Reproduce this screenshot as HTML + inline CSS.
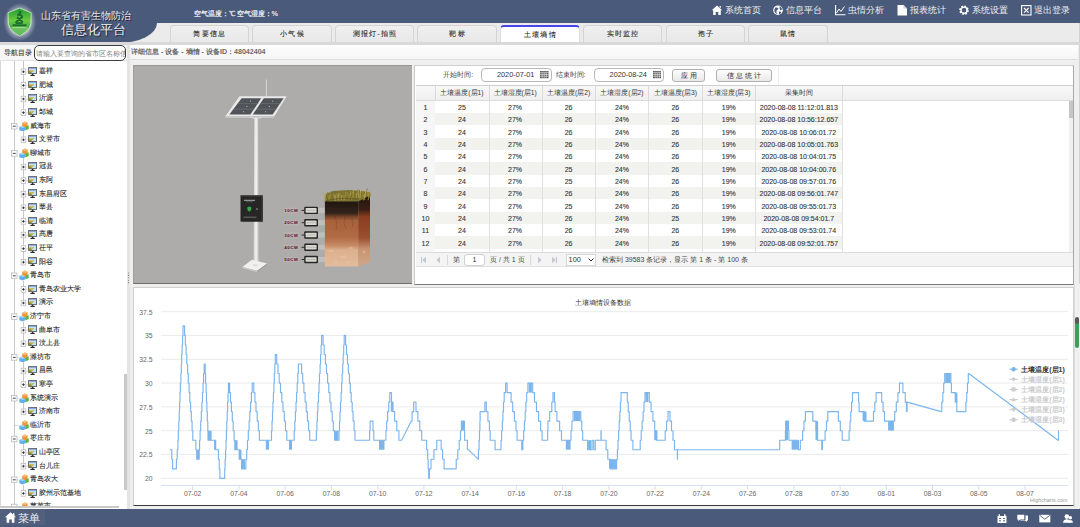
<!DOCTYPE html>
<html><head><meta charset="utf-8"><style>
*{box-sizing:border-box;margin:0;padding:0}
html,body{width:1080px;height:527px;overflow:hidden;background:#efefef;font-family:"Liberation Sans",sans-serif;color:#333}
.a{position:absolute}
.t{white-space:nowrap;line-height:1}
.k{-webkit-text-stroke:0.1px currentColor}
.tab{position:absolute;top:25.3px;height:16.9px;width:79.5px;background:linear-gradient(#f0f0f0,#e8e8e8);border:1px solid #d4d4d4;border-bottom:none;border-radius:4px 4px 0 0;font-size:7.2px;text-align:center;line-height:15.6px;color:#262626;letter-spacing:1.2px;padding-left:1px;-webkit-text-stroke:0.1px #262626}
.tab.act{background:#fff;border-color:#dcdcdc;border-top:2px solid #4646ec;line-height:15.9px}
.nav{position:absolute;top:5px;height:12px;font-size:9.3px;color:#eef0f4;line-height:12px;white-space:nowrap}
.nav svg{position:absolute;top:0.5px}
</style></head><body>
<div class="a" style="left:0;top:22.6px;width:1080px;height:20px;background:#ebebeb"></div>
<div class="a" style="left:1078.5px;top:22.6px;width:0.9px;height:486px;background:#d2d2d2"></div>
<div class="a" style="left:0;top:0;width:1080px;height:22.6px;background:#4a5a7a"></div>
<div class="a" style="left:0;top:0;width:157px;height:42.6px;background:#4a5a7a;border-bottom-right-radius:39px 20px"></div>
<svg class="a" style="left:0;top:0" width="42" height="43" viewBox="0 0 42 43">
<defs><radialGradient id="glow" cx="50%" cy="50%" r="50%"><stop offset="0.6" stop-color="#fff" stop-opacity="0.75"/><stop offset="0.78" stop-color="#fff" stop-opacity="0.3"/><stop offset="1" stop-color="#fff" stop-opacity="0"/></radialGradient>
<linearGradient id="sh" x1="0" y1="0" x2="0" y2="1"><stop offset="0" stop-color="#1f9a34"/><stop offset="0.45" stop-color="#6ccb3e"/><stop offset="0.62" stop-color="#4fb848"/><stop offset="1" stop-color="#2f9a3a"/></linearGradient></defs>
<ellipse cx="19.8" cy="22" rx="16.5" ry="19" fill="url(#glow)"/>
<path d="M19.6 8.1 L31.2 12.8 L30.8 24 Q29 31 19.6 35.9 Q10.2 31 8.4 24 L8 12.8 Z" fill="url(#sh)" stroke="#dff3d8" stroke-width="0.7"/>
<path d="M10 27.5 Q19.6 26 29.5 27.5 Q27 32 19.6 35 Q12 32 10 27.5Z" fill="#8ed47a" opacity="0.55"/>
<circle cx="20" cy="12.6" r="1.5" fill="#1c6e2c"/>
<path d="M17.2 14.8 Q22 14.6 22.2 17 L16.4 21.8 Q15.6 23.1 17.2 23.1 L22.6 23.1 M17 17.2 L22.8 22.2" stroke="#1c6e2c" stroke-width="1.9" fill="none" stroke-linejoin="round"/>
<path d="M12.5 25.3 H26.5" stroke="#1c6e2c" stroke-width="1.9"/>
<path d="M12.5 27.4 H26.5" stroke="#c8f0b0" stroke-width="0.6"/>
</svg>
<div class="a t" style="left:41px;top:10.8px;font-size:10.1px;color:#e4e6ea;text-shadow:0.6px 0.6px 0.6px #1a2236">山东省有害生物防治</div>
<div class="a t" style="left:61.3px;top:23.7px;font-size:12.7px;color:#eceef2;text-shadow:0.7px 0.7px 0.7px #1a2236">信息化平台</div>
<div class="a t" style="left:193.5px;top:10.2px;font-size:7.3px;color:#e8eaf0;font-weight:bold">空气温度：℃ 空气湿度：%</div>
<svg class="a" style="left:711.5px;top:5.3px" width="11" height="11" viewBox="0 0 11 11"><path d="M5 0.5 L10.2 5.2 H8.8 V10 H6.3 V7 H3.7 V10 H1.2 V5.2 H-0.2 Z M7.5 1 h1.3 v2.3 l-1.3 -1.2z" fill="#fff"/></svg>
<div class="a t" style="left:725.0px;top:6.2px;font-size:9.2px;color:#eef0f4">系统首页</div>
<svg class="a" style="left:773.0px;top:5.3px" width="11" height="11" viewBox="0 0 11 11"><circle cx="5" cy="5.2" r="4.8" fill="#fff"/><path d="M2.5 2.5 Q4.5 2 5.5 3.5 Q4.5 5 3.5 5.5 Q3 7.5 4.5 9.2 Q2 8.5 1.3 6 Q1.2 3.8 2.5 2.5Z M6.5 1.2 Q8.7 2 9.3 4.5 Q8 4.5 7.2 5.5 Q6.5 4 6.5 1.2Z M6 6.5 Q7.5 6 8.3 7.5 Q7.5 9 6 9.5Z" fill="#4a5a7a"/></svg>
<div class="a t" style="left:786.0px;top:6.2px;font-size:9.2px;color:#eef0f4">信息平台</div>
<svg class="a" style="left:835.0px;top:5.3px" width="11" height="11" viewBox="0 0 11 11"><path d="M0.6 0 V9.8 H10.5" stroke="#fff" stroke-width="1.1" fill="none"/><path d="M1.5 8 L4 4 L6 6.5 L9.5 1.5" stroke="#fff" stroke-width="1" fill="none"/></svg>
<div class="a t" style="left:848.0px;top:6.2px;font-size:9.2px;color:#eef0f4">虫情分析</div>
<svg class="a" style="left:896.7px;top:5.3px" width="11" height="11" viewBox="0 0 11 11"><path d="M0.5 0 H6.5 L10 3.5 V10.5 H0.5 Z" fill="#fff"/><path d="M6.5 0 V3.5 H10" fill="#c8ccd8"/></svg>
<div class="a t" style="left:909.6px;top:6.2px;font-size:9.2px;color:#eef0f4">报表统计</div>
<svg class="a" style="left:959.0px;top:5.3px" width="11" height="11" viewBox="0 0 11 11"><circle cx="5" cy="5.2" r="3.6" fill="none" stroke="#fff" stroke-width="2.4" stroke-dasharray="1.6 1.2"/><circle cx="5" cy="5.2" r="3.1" fill="none" stroke="#fff" stroke-width="1.3"/></svg>
<div class="a t" style="left:972.0px;top:6.2px;font-size:9.2px;color:#eef0f4">系统设置</div>
<svg class="a" style="left:1021.0px;top:5.3px" width="11" height="11" viewBox="0 0 11 11"><rect x="0.6" y="0.6" width="9.4" height="9.4" fill="none" stroke="#fff" stroke-width="1.1"/><path d="M3 3 L7.6 7.6 M7.6 3 L3 7.6" stroke="#fff" stroke-width="1.1"/></svg>
<div class="a t" style="left:1033.7px;top:6.2px;font-size:9.2px;color:#eef0f4">退出登录</div>
<div class="a" style="left:0;top:42.4px;width:1080px;height:2.3px;background:#d9d9d9"></div>
<div class="tab" style="left:169.5px">简要信息</div>
<div class="tab" style="left:252.2px">小气候</div>
<div class="tab" style="left:334.8px">测报灯-拍照</div>
<div class="tab" style="left:417.4px">靶标</div>
<div class="tab act" style="left:500.2px">土壤墒情</div>
<div class="tab" style="left:582.9px">实时监控</div>
<div class="tab" style="left:665.5px">孢子</div>
<div class="tab" style="left:748.0px">鼠情</div>
<div class="a" style="left:0;top:44.6px;width:127.4px;height:16.6px;background:#f6f6f6;border-bottom:1px solid #e2e2e2"></div>
<div class="a t k" style="left:3.8px;top:49.6px;font-size:6.9px;color:#3a3a3a">导航目录</div>
<div class="a" style="left:34px;top:45.3px;width:91.8px;height:16.2px;border:1.1px solid #3c3c3c;border-radius:5px;background:#fff;overflow:hidden"><div class="t" style="position:absolute;left:0.7px;top:3.4px;font-size:7.3px;color:#808080">请输入要查询的省市区名称信息</div></div>
<div class="a" style="left:0;top:61.2px;width:127.4px;height:447.6px;background:#fff;border-left:1px solid #d8d8d8;overflow:hidden">
</div>
<div class="a" style="left:14.2px;top:61.2px;width:0;height:445px;border-left:0.8px solid #c8c8c8"></div>
<div class="a" style="left:23.3px;top:61.2px;width:0;height:51.4px;border-left:0.8px solid #c8c8c8"></div>
<div class="a" style="left:23.3px;top:131.2px;width:0;height:8.6px;border-left:0.8px solid #c8c8c8"></div>
<div class="a" style="left:23.3px;top:158.4px;width:0;height:103.8px;border-left:0.8px solid #c8c8c8"></div>
<div class="a" style="left:23.3px;top:280.8px;width:0;height:22.2px;border-left:0.8px solid #c8c8c8"></div>
<div class="a" style="left:23.3px;top:321.6px;width:0;height:22.2px;border-left:0.8px solid #c8c8c8"></div>
<div class="a" style="left:23.3px;top:362.4px;width:0;height:22.2px;border-left:0.8px solid #c8c8c8"></div>
<div class="a" style="left:23.3px;top:403.2px;width:0;height:8.6px;border-left:0.8px solid #c8c8c8"></div>
<div class="a" style="left:23.3px;top:444.0px;width:0;height:22.2px;border-left:0.8px solid #c8c8c8"></div>
<div class="a" style="left:23.3px;top:484.8px;width:0;height:8.6px;border-left:0.8px solid #c8c8c8"></div>
<svg class="a" style="left:0;top:0" width="130" height="509" viewBox="0 0 130 509"><rect x="21.1" y="69.00" width="4.7" height="5.6" fill="#fff" stroke="#b4b4b4" stroke-width="0.7"/><path d="M22.1 71.80 h2.7 M23.45 70.45 v2.7" stroke="#222" stroke-width="0.8"/><path d="M25.8 71.80 h2" stroke="#c8c8c8" stroke-width="0.6"/><rect x="21.1" y="82.60" width="4.7" height="5.6" fill="#fff" stroke="#b4b4b4" stroke-width="0.7"/><path d="M22.1 85.40 h2.7 M23.45 84.05 v2.7" stroke="#222" stroke-width="0.8"/><path d="M25.8 85.40 h2" stroke="#c8c8c8" stroke-width="0.6"/><rect x="21.1" y="96.20" width="4.7" height="5.6" fill="#fff" stroke="#b4b4b4" stroke-width="0.7"/><path d="M22.1 99.00 h2.7 M23.45 97.65 v2.7" stroke="#222" stroke-width="0.8"/><path d="M25.8 99.00 h2" stroke="#c8c8c8" stroke-width="0.6"/><rect x="21.1" y="109.80" width="4.7" height="5.6" fill="#fff" stroke="#b4b4b4" stroke-width="0.7"/><path d="M22.1 112.60 h2.7 M23.45 111.25 v2.7" stroke="#222" stroke-width="0.8"/><path d="M25.8 112.60 h2" stroke="#c8c8c8" stroke-width="0.6"/><rect x="11.6" y="123.40" width="5.4" height="5.6" fill="#fafafa" stroke="#b4b4b4" stroke-width="0.7"/><path d="M12.9 126.20 h2.8" stroke="#333" stroke-width="0.9"/><path d="M17 126.20 h1.8" stroke="#c8c8c8" stroke-width="0.6"/><rect x="21.1" y="137.00" width="4.7" height="5.6" fill="#fff" stroke="#b4b4b4" stroke-width="0.7"/><path d="M22.1 139.80 h2.7 M23.45 138.45 v2.7" stroke="#222" stroke-width="0.8"/><path d="M25.8 139.80 h2" stroke="#c8c8c8" stroke-width="0.6"/><rect x="11.6" y="150.60" width="5.4" height="5.6" fill="#fafafa" stroke="#b4b4b4" stroke-width="0.7"/><path d="M12.9 153.40 h2.8" stroke="#333" stroke-width="0.9"/><path d="M17 153.40 h1.8" stroke="#c8c8c8" stroke-width="0.6"/><rect x="21.1" y="164.20" width="4.7" height="5.6" fill="#fff" stroke="#b4b4b4" stroke-width="0.7"/><path d="M22.1 167.00 h2.7 M23.45 165.65 v2.7" stroke="#222" stroke-width="0.8"/><path d="M25.8 167.00 h2" stroke="#c8c8c8" stroke-width="0.6"/><rect x="21.1" y="177.80" width="4.7" height="5.6" fill="#fff" stroke="#b4b4b4" stroke-width="0.7"/><path d="M22.1 180.60 h2.7 M23.45 179.25 v2.7" stroke="#222" stroke-width="0.8"/><path d="M25.8 180.60 h2" stroke="#c8c8c8" stroke-width="0.6"/><rect x="21.1" y="191.40" width="4.7" height="5.6" fill="#fff" stroke="#b4b4b4" stroke-width="0.7"/><path d="M22.1 194.20 h2.7 M23.45 192.85 v2.7" stroke="#222" stroke-width="0.8"/><path d="M25.8 194.20 h2" stroke="#c8c8c8" stroke-width="0.6"/><rect x="21.1" y="205.00" width="4.7" height="5.6" fill="#fff" stroke="#b4b4b4" stroke-width="0.7"/><path d="M22.1 207.80 h2.7 M23.45 206.45 v2.7" stroke="#222" stroke-width="0.8"/><path d="M25.8 207.80 h2" stroke="#c8c8c8" stroke-width="0.6"/><rect x="21.1" y="218.60" width="4.7" height="5.6" fill="#fff" stroke="#b4b4b4" stroke-width="0.7"/><path d="M22.1 221.40 h2.7 M23.45 220.05 v2.7" stroke="#222" stroke-width="0.8"/><path d="M25.8 221.40 h2" stroke="#c8c8c8" stroke-width="0.6"/><rect x="21.1" y="232.20" width="4.7" height="5.6" fill="#fff" stroke="#b4b4b4" stroke-width="0.7"/><path d="M22.1 235.00 h2.7 M23.45 233.65 v2.7" stroke="#222" stroke-width="0.8"/><path d="M25.8 235.00 h2" stroke="#c8c8c8" stroke-width="0.6"/><rect x="21.1" y="245.80" width="4.7" height="5.6" fill="#fff" stroke="#b4b4b4" stroke-width="0.7"/><path d="M22.1 248.60 h2.7 M23.45 247.25 v2.7" stroke="#222" stroke-width="0.8"/><path d="M25.8 248.60 h2" stroke="#c8c8c8" stroke-width="0.6"/><rect x="21.1" y="259.40" width="4.7" height="5.6" fill="#fff" stroke="#b4b4b4" stroke-width="0.7"/><path d="M22.1 262.20 h2.7 M23.45 260.85 v2.7" stroke="#222" stroke-width="0.8"/><path d="M25.8 262.20 h2" stroke="#c8c8c8" stroke-width="0.6"/><rect x="11.6" y="273.00" width="5.4" height="5.6" fill="#fafafa" stroke="#b4b4b4" stroke-width="0.7"/><path d="M12.9 275.80 h2.8" stroke="#333" stroke-width="0.9"/><path d="M17 275.80 h1.8" stroke="#c8c8c8" stroke-width="0.6"/><rect x="21.1" y="286.60" width="4.7" height="5.6" fill="#fff" stroke="#b4b4b4" stroke-width="0.7"/><path d="M22.1 289.40 h2.7 M23.45 288.05 v2.7" stroke="#222" stroke-width="0.8"/><path d="M25.8 289.40 h2" stroke="#c8c8c8" stroke-width="0.6"/><rect x="21.1" y="300.20" width="4.7" height="5.6" fill="#fff" stroke="#b4b4b4" stroke-width="0.7"/><path d="M22.1 303.00 h2.7 M23.45 301.65 v2.7" stroke="#222" stroke-width="0.8"/><path d="M25.8 303.00 h2" stroke="#c8c8c8" stroke-width="0.6"/><rect x="11.6" y="313.80" width="5.4" height="5.6" fill="#fafafa" stroke="#b4b4b4" stroke-width="0.7"/><path d="M12.9 316.60 h2.8" stroke="#333" stroke-width="0.9"/><path d="M17 316.60 h1.8" stroke="#c8c8c8" stroke-width="0.6"/><rect x="21.1" y="327.40" width="4.7" height="5.6" fill="#fff" stroke="#b4b4b4" stroke-width="0.7"/><path d="M22.1 330.20 h2.7 M23.45 328.85 v2.7" stroke="#222" stroke-width="0.8"/><path d="M25.8 330.20 h2" stroke="#c8c8c8" stroke-width="0.6"/><rect x="21.1" y="341.00" width="4.7" height="5.6" fill="#fff" stroke="#b4b4b4" stroke-width="0.7"/><path d="M22.1 343.80 h2.7 M23.45 342.45 v2.7" stroke="#222" stroke-width="0.8"/><path d="M25.8 343.80 h2" stroke="#c8c8c8" stroke-width="0.6"/><rect x="11.6" y="354.60" width="5.4" height="5.6" fill="#fafafa" stroke="#b4b4b4" stroke-width="0.7"/><path d="M12.9 357.40 h2.8" stroke="#333" stroke-width="0.9"/><path d="M17 357.40 h1.8" stroke="#c8c8c8" stroke-width="0.6"/><rect x="21.1" y="368.20" width="4.7" height="5.6" fill="#fff" stroke="#b4b4b4" stroke-width="0.7"/><path d="M22.1 371.00 h2.7 M23.45 369.65 v2.7" stroke="#222" stroke-width="0.8"/><path d="M25.8 371.00 h2" stroke="#c8c8c8" stroke-width="0.6"/><rect x="21.1" y="381.80" width="4.7" height="5.6" fill="#fff" stroke="#b4b4b4" stroke-width="0.7"/><path d="M22.1 384.60 h2.7 M23.45 383.25 v2.7" stroke="#222" stroke-width="0.8"/><path d="M25.8 384.60 h2" stroke="#c8c8c8" stroke-width="0.6"/><rect x="11.6" y="395.40" width="5.4" height="5.6" fill="#fafafa" stroke="#b4b4b4" stroke-width="0.7"/><path d="M12.9 398.20 h2.8" stroke="#333" stroke-width="0.9"/><path d="M17 398.20 h1.8" stroke="#c8c8c8" stroke-width="0.6"/><rect x="21.1" y="409.00" width="4.7" height="5.6" fill="#fff" stroke="#b4b4b4" stroke-width="0.7"/><path d="M22.1 411.80 h2.7 M23.45 410.45 v2.7" stroke="#222" stroke-width="0.8"/><path d="M25.8 411.80 h2" stroke="#c8c8c8" stroke-width="0.6"/><path d="M14.5 425.40 h4.3" stroke="#c8c8c8" stroke-width="0.7"/><rect x="11.6" y="436.20" width="5.4" height="5.6" fill="#fafafa" stroke="#b4b4b4" stroke-width="0.7"/><path d="M12.9 439.00 h2.8" stroke="#333" stroke-width="0.9"/><path d="M17 439.00 h1.8" stroke="#c8c8c8" stroke-width="0.6"/><rect x="21.1" y="449.80" width="4.7" height="5.6" fill="#fff" stroke="#b4b4b4" stroke-width="0.7"/><path d="M22.1 452.60 h2.7 M23.45 451.25 v2.7" stroke="#222" stroke-width="0.8"/><path d="M25.8 452.60 h2" stroke="#c8c8c8" stroke-width="0.6"/><rect x="21.1" y="463.40" width="4.7" height="5.6" fill="#fff" stroke="#b4b4b4" stroke-width="0.7"/><path d="M22.1 466.20 h2.7 M23.45 464.85 v2.7" stroke="#222" stroke-width="0.8"/><path d="M25.8 466.20 h2" stroke="#c8c8c8" stroke-width="0.6"/><rect x="11.6" y="477.00" width="5.4" height="5.6" fill="#fafafa" stroke="#b4b4b4" stroke-width="0.7"/><path d="M12.9 479.80 h2.8" stroke="#333" stroke-width="0.9"/><path d="M17 479.80 h1.8" stroke="#c8c8c8" stroke-width="0.6"/><rect x="21.1" y="490.60" width="4.7" height="5.6" fill="#fff" stroke="#b4b4b4" stroke-width="0.7"/><path d="M22.1 493.40 h2.7 M23.45 492.05 v2.7" stroke="#222" stroke-width="0.8"/><path d="M25.8 493.40 h2" stroke="#c8c8c8" stroke-width="0.6"/><rect x="11.6" y="504.20" width="5.4" height="5.6" fill="#fafafa" stroke="#b4b4b4" stroke-width="0.7"/><path d="M12.9 507.00 h2.8" stroke="#333" stroke-width="0.9"/><path d="M17 507.00 h1.8" stroke="#c8c8c8" stroke-width="0.6"/></svg>
<svg class="a" style="left:28px;top:67.0px" width="9.2" height="9.2" viewBox="0 0 9.2 9.2">
<rect x="0.2" y="0.2" width="8.8" height="6.6" fill="#3a3a3a"/><rect x="0.9" y="0.9" width="7.4" height="5.2" fill="#bfe3f8"/>
<rect x="0.9" y="0.9" width="7.4" height="1" fill="#8aa3d8"/>
<path d="M0.9 6.1 L0.9 3.6 Q3 3 4.2 3.6 Q5 2.6 6.3 3.3 Q4.5 4.5 3.8 6.1Z" fill="#d4a82a"/><path d="M0.9 6.1 L0.9 4.6 Q2 4.2 3 5.2 L3.2 6.1Z" fill="#6a9a2a"/>
<rect x="3.8" y="6.8" width="1.6" height="1.2" fill="#333"/><rect x="2.4" y="7.9" width="4.4" height="1.1" fill="#2a2a2a"/>
</svg>
<div class="a t k" style="left:39.1px;top:68.2px;font-size:6.9px;color:#262626">嘉祥</div>
<svg class="a" style="left:28px;top:80.6px" width="9.2" height="9.2" viewBox="0 0 9.2 9.2">
<rect x="0.2" y="0.2" width="8.8" height="6.6" fill="#3a3a3a"/><rect x="0.9" y="0.9" width="7.4" height="5.2" fill="#bfe3f8"/>
<rect x="0.9" y="0.9" width="7.4" height="1" fill="#8aa3d8"/>
<path d="M0.9 6.1 L0.9 3.6 Q3 3 4.2 3.6 Q5 2.6 6.3 3.3 Q4.5 4.5 3.8 6.1Z" fill="#d4a82a"/><path d="M0.9 6.1 L0.9 4.6 Q2 4.2 3 5.2 L3.2 6.1Z" fill="#6a9a2a"/>
<rect x="3.8" y="6.8" width="1.6" height="1.2" fill="#333"/><rect x="2.4" y="7.9" width="4.4" height="1.1" fill="#2a2a2a"/>
</svg>
<div class="a t k" style="left:39.1px;top:81.8px;font-size:6.9px;color:#262626">肥城</div>
<svg class="a" style="left:28px;top:94.2px" width="9.2" height="9.2" viewBox="0 0 9.2 9.2">
<rect x="0.2" y="0.2" width="8.8" height="6.6" fill="#3a3a3a"/><rect x="0.9" y="0.9" width="7.4" height="5.2" fill="#bfe3f8"/>
<rect x="0.9" y="0.9" width="7.4" height="1" fill="#8aa3d8"/>
<path d="M0.9 6.1 L0.9 3.6 Q3 3 4.2 3.6 Q5 2.6 6.3 3.3 Q4.5 4.5 3.8 6.1Z" fill="#d4a82a"/><path d="M0.9 6.1 L0.9 4.6 Q2 4.2 3 5.2 L3.2 6.1Z" fill="#6a9a2a"/>
<rect x="3.8" y="6.8" width="1.6" height="1.2" fill="#333"/><rect x="2.4" y="7.9" width="4.4" height="1.1" fill="#2a2a2a"/>
</svg>
<div class="a t k" style="left:39.1px;top:95.4px;font-size:6.9px;color:#262626">沂源</div>
<svg class="a" style="left:28px;top:107.8px" width="9.2" height="9.2" viewBox="0 0 9.2 9.2">
<rect x="0.2" y="0.2" width="8.8" height="6.6" fill="#3a3a3a"/><rect x="0.9" y="0.9" width="7.4" height="5.2" fill="#bfe3f8"/>
<rect x="0.9" y="0.9" width="7.4" height="1" fill="#8aa3d8"/>
<path d="M0.9 6.1 L0.9 3.6 Q3 3 4.2 3.6 Q5 2.6 6.3 3.3 Q4.5 4.5 3.8 6.1Z" fill="#d4a82a"/><path d="M0.9 6.1 L0.9 4.6 Q2 4.2 3 5.2 L3.2 6.1Z" fill="#6a9a2a"/>
<rect x="3.8" y="6.8" width="1.6" height="1.2" fill="#333"/><rect x="2.4" y="7.9" width="4.4" height="1.1" fill="#2a2a2a"/>
</svg>
<div class="a t k" style="left:39.1px;top:109.0px;font-size:6.9px;color:#262626">邹城</div>
<svg class="a" style="left:18.8px;top:120.7px" width="10" height="10.5" viewBox="0 0 10 10.5">
<path d="M6 5 L9.6 4.2 L9.8 8 L6.5 9.2Z" fill="#5bb53a"/>
<path d="M0.3 6 L3.5 4.6 L6.8 5.8 L6.8 9 L3.8 10.4 L0.3 9.2Z" fill="#62aee8"/><path d="M0.3 6 L3.5 4.6 L6.8 5.8 L3.8 7.1Z" fill="#a8d4f6"/>
<path d="M3.2 2 L5.8 0.4 L8.6 1.6 L8.6 4.6 L5.8 6.2 L3.2 4.8Z" fill="#f0963a"/><path d="M3.2 2 L5.8 0.4 L8.6 1.6 L6 3.1Z" fill="#f9c07a"/>
</svg>
<div class="a t k" style="left:30.3px;top:122.6px;font-size:6.9px;color:#262626">威海市</div>
<svg class="a" style="left:28px;top:135.0px" width="9.2" height="9.2" viewBox="0 0 9.2 9.2">
<rect x="0.2" y="0.2" width="8.8" height="6.6" fill="#3a3a3a"/><rect x="0.9" y="0.9" width="7.4" height="5.2" fill="#bfe3f8"/>
<rect x="0.9" y="0.9" width="7.4" height="1" fill="#8aa3d8"/>
<path d="M0.9 6.1 L0.9 3.6 Q3 3 4.2 3.6 Q5 2.6 6.3 3.3 Q4.5 4.5 3.8 6.1Z" fill="#d4a82a"/><path d="M0.9 6.1 L0.9 4.6 Q2 4.2 3 5.2 L3.2 6.1Z" fill="#6a9a2a"/>
<rect x="3.8" y="6.8" width="1.6" height="1.2" fill="#333"/><rect x="2.4" y="7.9" width="4.4" height="1.1" fill="#2a2a2a"/>
</svg>
<div class="a t k" style="left:39.1px;top:136.2px;font-size:6.9px;color:#262626">文登市</div>
<svg class="a" style="left:18.8px;top:147.9px" width="10" height="10.5" viewBox="0 0 10 10.5">
<path d="M6 5 L9.6 4.2 L9.8 8 L6.5 9.2Z" fill="#5bb53a"/>
<path d="M0.3 6 L3.5 4.6 L6.8 5.8 L6.8 9 L3.8 10.4 L0.3 9.2Z" fill="#62aee8"/><path d="M0.3 6 L3.5 4.6 L6.8 5.8 L3.8 7.1Z" fill="#a8d4f6"/>
<path d="M3.2 2 L5.8 0.4 L8.6 1.6 L8.6 4.6 L5.8 6.2 L3.2 4.8Z" fill="#f0963a"/><path d="M3.2 2 L5.8 0.4 L8.6 1.6 L6 3.1Z" fill="#f9c07a"/>
</svg>
<div class="a t k" style="left:30.3px;top:149.8px;font-size:6.9px;color:#262626">聊城市</div>
<svg class="a" style="left:28px;top:162.2px" width="9.2" height="9.2" viewBox="0 0 9.2 9.2">
<rect x="0.2" y="0.2" width="8.8" height="6.6" fill="#3a3a3a"/><rect x="0.9" y="0.9" width="7.4" height="5.2" fill="#bfe3f8"/>
<rect x="0.9" y="0.9" width="7.4" height="1" fill="#8aa3d8"/>
<path d="M0.9 6.1 L0.9 3.6 Q3 3 4.2 3.6 Q5 2.6 6.3 3.3 Q4.5 4.5 3.8 6.1Z" fill="#d4a82a"/><path d="M0.9 6.1 L0.9 4.6 Q2 4.2 3 5.2 L3.2 6.1Z" fill="#6a9a2a"/>
<rect x="3.8" y="6.8" width="1.6" height="1.2" fill="#333"/><rect x="2.4" y="7.9" width="4.4" height="1.1" fill="#2a2a2a"/>
</svg>
<div class="a t k" style="left:39.1px;top:163.4px;font-size:6.9px;color:#262626">冠县</div>
<svg class="a" style="left:28px;top:175.8px" width="9.2" height="9.2" viewBox="0 0 9.2 9.2">
<rect x="0.2" y="0.2" width="8.8" height="6.6" fill="#3a3a3a"/><rect x="0.9" y="0.9" width="7.4" height="5.2" fill="#bfe3f8"/>
<rect x="0.9" y="0.9" width="7.4" height="1" fill="#8aa3d8"/>
<path d="M0.9 6.1 L0.9 3.6 Q3 3 4.2 3.6 Q5 2.6 6.3 3.3 Q4.5 4.5 3.8 6.1Z" fill="#d4a82a"/><path d="M0.9 6.1 L0.9 4.6 Q2 4.2 3 5.2 L3.2 6.1Z" fill="#6a9a2a"/>
<rect x="3.8" y="6.8" width="1.6" height="1.2" fill="#333"/><rect x="2.4" y="7.9" width="4.4" height="1.1" fill="#2a2a2a"/>
</svg>
<div class="a t k" style="left:39.1px;top:177.0px;font-size:6.9px;color:#262626">东阿</div>
<svg class="a" style="left:28px;top:189.4px" width="9.2" height="9.2" viewBox="0 0 9.2 9.2">
<rect x="0.2" y="0.2" width="8.8" height="6.6" fill="#3a3a3a"/><rect x="0.9" y="0.9" width="7.4" height="5.2" fill="#bfe3f8"/>
<rect x="0.9" y="0.9" width="7.4" height="1" fill="#8aa3d8"/>
<path d="M0.9 6.1 L0.9 3.6 Q3 3 4.2 3.6 Q5 2.6 6.3 3.3 Q4.5 4.5 3.8 6.1Z" fill="#d4a82a"/><path d="M0.9 6.1 L0.9 4.6 Q2 4.2 3 5.2 L3.2 6.1Z" fill="#6a9a2a"/>
<rect x="3.8" y="6.8" width="1.6" height="1.2" fill="#333"/><rect x="2.4" y="7.9" width="4.4" height="1.1" fill="#2a2a2a"/>
</svg>
<div class="a t k" style="left:39.1px;top:190.6px;font-size:6.9px;color:#262626">东昌府区</div>
<svg class="a" style="left:28px;top:203.0px" width="9.2" height="9.2" viewBox="0 0 9.2 9.2">
<rect x="0.2" y="0.2" width="8.8" height="6.6" fill="#3a3a3a"/><rect x="0.9" y="0.9" width="7.4" height="5.2" fill="#bfe3f8"/>
<rect x="0.9" y="0.9" width="7.4" height="1" fill="#8aa3d8"/>
<path d="M0.9 6.1 L0.9 3.6 Q3 3 4.2 3.6 Q5 2.6 6.3 3.3 Q4.5 4.5 3.8 6.1Z" fill="#d4a82a"/><path d="M0.9 6.1 L0.9 4.6 Q2 4.2 3 5.2 L3.2 6.1Z" fill="#6a9a2a"/>
<rect x="3.8" y="6.8" width="1.6" height="1.2" fill="#333"/><rect x="2.4" y="7.9" width="4.4" height="1.1" fill="#2a2a2a"/>
</svg>
<div class="a t k" style="left:39.1px;top:204.2px;font-size:6.9px;color:#262626">莘县</div>
<svg class="a" style="left:28px;top:216.6px" width="9.2" height="9.2" viewBox="0 0 9.2 9.2">
<rect x="0.2" y="0.2" width="8.8" height="6.6" fill="#3a3a3a"/><rect x="0.9" y="0.9" width="7.4" height="5.2" fill="#bfe3f8"/>
<rect x="0.9" y="0.9" width="7.4" height="1" fill="#8aa3d8"/>
<path d="M0.9 6.1 L0.9 3.6 Q3 3 4.2 3.6 Q5 2.6 6.3 3.3 Q4.5 4.5 3.8 6.1Z" fill="#d4a82a"/><path d="M0.9 6.1 L0.9 4.6 Q2 4.2 3 5.2 L3.2 6.1Z" fill="#6a9a2a"/>
<rect x="3.8" y="6.8" width="1.6" height="1.2" fill="#333"/><rect x="2.4" y="7.9" width="4.4" height="1.1" fill="#2a2a2a"/>
</svg>
<div class="a t k" style="left:39.1px;top:217.8px;font-size:6.9px;color:#262626">临清</div>
<svg class="a" style="left:28px;top:230.2px" width="9.2" height="9.2" viewBox="0 0 9.2 9.2">
<rect x="0.2" y="0.2" width="8.8" height="6.6" fill="#3a3a3a"/><rect x="0.9" y="0.9" width="7.4" height="5.2" fill="#bfe3f8"/>
<rect x="0.9" y="0.9" width="7.4" height="1" fill="#8aa3d8"/>
<path d="M0.9 6.1 L0.9 3.6 Q3 3 4.2 3.6 Q5 2.6 6.3 3.3 Q4.5 4.5 3.8 6.1Z" fill="#d4a82a"/><path d="M0.9 6.1 L0.9 4.6 Q2 4.2 3 5.2 L3.2 6.1Z" fill="#6a9a2a"/>
<rect x="3.8" y="6.8" width="1.6" height="1.2" fill="#333"/><rect x="2.4" y="7.9" width="4.4" height="1.1" fill="#2a2a2a"/>
</svg>
<div class="a t k" style="left:39.1px;top:231.4px;font-size:6.9px;color:#262626">高唐</div>
<svg class="a" style="left:28px;top:243.8px" width="9.2" height="9.2" viewBox="0 0 9.2 9.2">
<rect x="0.2" y="0.2" width="8.8" height="6.6" fill="#3a3a3a"/><rect x="0.9" y="0.9" width="7.4" height="5.2" fill="#bfe3f8"/>
<rect x="0.9" y="0.9" width="7.4" height="1" fill="#8aa3d8"/>
<path d="M0.9 6.1 L0.9 3.6 Q3 3 4.2 3.6 Q5 2.6 6.3 3.3 Q4.5 4.5 3.8 6.1Z" fill="#d4a82a"/><path d="M0.9 6.1 L0.9 4.6 Q2 4.2 3 5.2 L3.2 6.1Z" fill="#6a9a2a"/>
<rect x="3.8" y="6.8" width="1.6" height="1.2" fill="#333"/><rect x="2.4" y="7.9" width="4.4" height="1.1" fill="#2a2a2a"/>
</svg>
<div class="a t k" style="left:39.1px;top:245.0px;font-size:6.9px;color:#262626">茌平</div>
<svg class="a" style="left:28px;top:257.4px" width="9.2" height="9.2" viewBox="0 0 9.2 9.2">
<rect x="0.2" y="0.2" width="8.8" height="6.6" fill="#3a3a3a"/><rect x="0.9" y="0.9" width="7.4" height="5.2" fill="#bfe3f8"/>
<rect x="0.9" y="0.9" width="7.4" height="1" fill="#8aa3d8"/>
<path d="M0.9 6.1 L0.9 3.6 Q3 3 4.2 3.6 Q5 2.6 6.3 3.3 Q4.5 4.5 3.8 6.1Z" fill="#d4a82a"/><path d="M0.9 6.1 L0.9 4.6 Q2 4.2 3 5.2 L3.2 6.1Z" fill="#6a9a2a"/>
<rect x="3.8" y="6.8" width="1.6" height="1.2" fill="#333"/><rect x="2.4" y="7.9" width="4.4" height="1.1" fill="#2a2a2a"/>
</svg>
<div class="a t k" style="left:39.1px;top:258.6px;font-size:6.9px;color:#262626">阳谷</div>
<svg class="a" style="left:18.8px;top:270.3px" width="10" height="10.5" viewBox="0 0 10 10.5">
<path d="M6 5 L9.6 4.2 L9.8 8 L6.5 9.2Z" fill="#5bb53a"/>
<path d="M0.3 6 L3.5 4.6 L6.8 5.8 L6.8 9 L3.8 10.4 L0.3 9.2Z" fill="#62aee8"/><path d="M0.3 6 L3.5 4.6 L6.8 5.8 L3.8 7.1Z" fill="#a8d4f6"/>
<path d="M3.2 2 L5.8 0.4 L8.6 1.6 L8.6 4.6 L5.8 6.2 L3.2 4.8Z" fill="#f0963a"/><path d="M3.2 2 L5.8 0.4 L8.6 1.6 L6 3.1Z" fill="#f9c07a"/>
</svg>
<div class="a t k" style="left:30.3px;top:272.2px;font-size:6.9px;color:#262626">青岛市</div>
<svg class="a" style="left:28px;top:284.6px" width="9.2" height="9.2" viewBox="0 0 9.2 9.2">
<rect x="0.2" y="0.2" width="8.8" height="6.6" fill="#3a3a3a"/><rect x="0.9" y="0.9" width="7.4" height="5.2" fill="#bfe3f8"/>
<rect x="0.9" y="0.9" width="7.4" height="1" fill="#8aa3d8"/>
<path d="M0.9 6.1 L0.9 3.6 Q3 3 4.2 3.6 Q5 2.6 6.3 3.3 Q4.5 4.5 3.8 6.1Z" fill="#d4a82a"/><path d="M0.9 6.1 L0.9 4.6 Q2 4.2 3 5.2 L3.2 6.1Z" fill="#6a9a2a"/>
<rect x="3.8" y="6.8" width="1.6" height="1.2" fill="#333"/><rect x="2.4" y="7.9" width="4.4" height="1.1" fill="#2a2a2a"/>
</svg>
<div class="a t k" style="left:39.1px;top:285.8px;font-size:6.9px;color:#262626">青岛农业大学</div>
<svg class="a" style="left:28px;top:298.2px" width="9.2" height="9.2" viewBox="0 0 9.2 9.2">
<rect x="0.2" y="0.2" width="8.8" height="6.6" fill="#3a3a3a"/><rect x="0.9" y="0.9" width="7.4" height="5.2" fill="#bfe3f8"/>
<rect x="0.9" y="0.9" width="7.4" height="1" fill="#8aa3d8"/>
<path d="M0.9 6.1 L0.9 3.6 Q3 3 4.2 3.6 Q5 2.6 6.3 3.3 Q4.5 4.5 3.8 6.1Z" fill="#d4a82a"/><path d="M0.9 6.1 L0.9 4.6 Q2 4.2 3 5.2 L3.2 6.1Z" fill="#6a9a2a"/>
<rect x="3.8" y="6.8" width="1.6" height="1.2" fill="#333"/><rect x="2.4" y="7.9" width="4.4" height="1.1" fill="#2a2a2a"/>
</svg>
<div class="a t k" style="left:39.1px;top:299.4px;font-size:6.9px;color:#262626">演示</div>
<svg class="a" style="left:18.8px;top:311.1px" width="10" height="10.5" viewBox="0 0 10 10.5">
<path d="M6 5 L9.6 4.2 L9.8 8 L6.5 9.2Z" fill="#5bb53a"/>
<path d="M0.3 6 L3.5 4.6 L6.8 5.8 L6.8 9 L3.8 10.4 L0.3 9.2Z" fill="#62aee8"/><path d="M0.3 6 L3.5 4.6 L6.8 5.8 L3.8 7.1Z" fill="#a8d4f6"/>
<path d="M3.2 2 L5.8 0.4 L8.6 1.6 L8.6 4.6 L5.8 6.2 L3.2 4.8Z" fill="#f0963a"/><path d="M3.2 2 L5.8 0.4 L8.6 1.6 L6 3.1Z" fill="#f9c07a"/>
</svg>
<div class="a t k" style="left:30.3px;top:313.0px;font-size:6.9px;color:#262626">济宁市</div>
<svg class="a" style="left:28px;top:325.4px" width="9.2" height="9.2" viewBox="0 0 9.2 9.2">
<rect x="0.2" y="0.2" width="8.8" height="6.6" fill="#3a3a3a"/><rect x="0.9" y="0.9" width="7.4" height="5.2" fill="#bfe3f8"/>
<rect x="0.9" y="0.9" width="7.4" height="1" fill="#8aa3d8"/>
<path d="M0.9 6.1 L0.9 3.6 Q3 3 4.2 3.6 Q5 2.6 6.3 3.3 Q4.5 4.5 3.8 6.1Z" fill="#d4a82a"/><path d="M0.9 6.1 L0.9 4.6 Q2 4.2 3 5.2 L3.2 6.1Z" fill="#6a9a2a"/>
<rect x="3.8" y="6.8" width="1.6" height="1.2" fill="#333"/><rect x="2.4" y="7.9" width="4.4" height="1.1" fill="#2a2a2a"/>
</svg>
<div class="a t k" style="left:39.1px;top:326.6px;font-size:6.9px;color:#262626">曲阜市</div>
<svg class="a" style="left:28px;top:339.0px" width="9.2" height="9.2" viewBox="0 0 9.2 9.2">
<rect x="0.2" y="0.2" width="8.8" height="6.6" fill="#3a3a3a"/><rect x="0.9" y="0.9" width="7.4" height="5.2" fill="#bfe3f8"/>
<rect x="0.9" y="0.9" width="7.4" height="1" fill="#8aa3d8"/>
<path d="M0.9 6.1 L0.9 3.6 Q3 3 4.2 3.6 Q5 2.6 6.3 3.3 Q4.5 4.5 3.8 6.1Z" fill="#d4a82a"/><path d="M0.9 6.1 L0.9 4.6 Q2 4.2 3 5.2 L3.2 6.1Z" fill="#6a9a2a"/>
<rect x="3.8" y="6.8" width="1.6" height="1.2" fill="#333"/><rect x="2.4" y="7.9" width="4.4" height="1.1" fill="#2a2a2a"/>
</svg>
<div class="a t k" style="left:39.1px;top:340.2px;font-size:6.9px;color:#262626">汶上县</div>
<svg class="a" style="left:18.8px;top:351.9px" width="10" height="10.5" viewBox="0 0 10 10.5">
<path d="M6 5 L9.6 4.2 L9.8 8 L6.5 9.2Z" fill="#5bb53a"/>
<path d="M0.3 6 L3.5 4.6 L6.8 5.8 L6.8 9 L3.8 10.4 L0.3 9.2Z" fill="#62aee8"/><path d="M0.3 6 L3.5 4.6 L6.8 5.8 L3.8 7.1Z" fill="#a8d4f6"/>
<path d="M3.2 2 L5.8 0.4 L8.6 1.6 L8.6 4.6 L5.8 6.2 L3.2 4.8Z" fill="#f0963a"/><path d="M3.2 2 L5.8 0.4 L8.6 1.6 L6 3.1Z" fill="#f9c07a"/>
</svg>
<div class="a t k" style="left:30.3px;top:353.8px;font-size:6.9px;color:#262626">潍坊市</div>
<svg class="a" style="left:28px;top:366.2px" width="9.2" height="9.2" viewBox="0 0 9.2 9.2">
<rect x="0.2" y="0.2" width="8.8" height="6.6" fill="#3a3a3a"/><rect x="0.9" y="0.9" width="7.4" height="5.2" fill="#bfe3f8"/>
<rect x="0.9" y="0.9" width="7.4" height="1" fill="#8aa3d8"/>
<path d="M0.9 6.1 L0.9 3.6 Q3 3 4.2 3.6 Q5 2.6 6.3 3.3 Q4.5 4.5 3.8 6.1Z" fill="#d4a82a"/><path d="M0.9 6.1 L0.9 4.6 Q2 4.2 3 5.2 L3.2 6.1Z" fill="#6a9a2a"/>
<rect x="3.8" y="6.8" width="1.6" height="1.2" fill="#333"/><rect x="2.4" y="7.9" width="4.4" height="1.1" fill="#2a2a2a"/>
</svg>
<div class="a t k" style="left:39.1px;top:367.4px;font-size:6.9px;color:#262626">昌邑</div>
<svg class="a" style="left:28px;top:379.8px" width="9.2" height="9.2" viewBox="0 0 9.2 9.2">
<rect x="0.2" y="0.2" width="8.8" height="6.6" fill="#3a3a3a"/><rect x="0.9" y="0.9" width="7.4" height="5.2" fill="#bfe3f8"/>
<rect x="0.9" y="0.9" width="7.4" height="1" fill="#8aa3d8"/>
<path d="M0.9 6.1 L0.9 3.6 Q3 3 4.2 3.6 Q5 2.6 6.3 3.3 Q4.5 4.5 3.8 6.1Z" fill="#d4a82a"/><path d="M0.9 6.1 L0.9 4.6 Q2 4.2 3 5.2 L3.2 6.1Z" fill="#6a9a2a"/>
<rect x="3.8" y="6.8" width="1.6" height="1.2" fill="#333"/><rect x="2.4" y="7.9" width="4.4" height="1.1" fill="#2a2a2a"/>
</svg>
<div class="a t k" style="left:39.1px;top:381.0px;font-size:6.9px;color:#262626">寒亭</div>
<svg class="a" style="left:18.8px;top:392.7px" width="10" height="10.5" viewBox="0 0 10 10.5">
<path d="M6 5 L9.6 4.2 L9.8 8 L6.5 9.2Z" fill="#5bb53a"/>
<path d="M0.3 6 L3.5 4.6 L6.8 5.8 L6.8 9 L3.8 10.4 L0.3 9.2Z" fill="#62aee8"/><path d="M0.3 6 L3.5 4.6 L6.8 5.8 L3.8 7.1Z" fill="#a8d4f6"/>
<path d="M3.2 2 L5.8 0.4 L8.6 1.6 L8.6 4.6 L5.8 6.2 L3.2 4.8Z" fill="#f0963a"/><path d="M3.2 2 L5.8 0.4 L8.6 1.6 L6 3.1Z" fill="#f9c07a"/>
</svg>
<div class="a t k" style="left:30.3px;top:394.6px;font-size:6.9px;color:#262626">系统演示</div>
<svg class="a" style="left:28px;top:407.0px" width="9.2" height="9.2" viewBox="0 0 9.2 9.2">
<rect x="0.2" y="0.2" width="8.8" height="6.6" fill="#3a3a3a"/><rect x="0.9" y="0.9" width="7.4" height="5.2" fill="#bfe3f8"/>
<rect x="0.9" y="0.9" width="7.4" height="1" fill="#8aa3d8"/>
<path d="M0.9 6.1 L0.9 3.6 Q3 3 4.2 3.6 Q5 2.6 6.3 3.3 Q4.5 4.5 3.8 6.1Z" fill="#d4a82a"/><path d="M0.9 6.1 L0.9 4.6 Q2 4.2 3 5.2 L3.2 6.1Z" fill="#6a9a2a"/>
<rect x="3.8" y="6.8" width="1.6" height="1.2" fill="#333"/><rect x="2.4" y="7.9" width="4.4" height="1.1" fill="#2a2a2a"/>
</svg>
<div class="a t k" style="left:39.1px;top:408.2px;font-size:6.9px;color:#262626">济南市</div>
<svg class="a" style="left:18.8px;top:419.9px" width="10" height="10.5" viewBox="0 0 10 10.5">
<path d="M6 5 L9.6 4.2 L9.8 8 L6.5 9.2Z" fill="#5bb53a"/>
<path d="M0.3 6 L3.5 4.6 L6.8 5.8 L6.8 9 L3.8 10.4 L0.3 9.2Z" fill="#62aee8"/><path d="M0.3 6 L3.5 4.6 L6.8 5.8 L3.8 7.1Z" fill="#a8d4f6"/>
<path d="M3.2 2 L5.8 0.4 L8.6 1.6 L8.6 4.6 L5.8 6.2 L3.2 4.8Z" fill="#f0963a"/><path d="M3.2 2 L5.8 0.4 L8.6 1.6 L6 3.1Z" fill="#f9c07a"/>
</svg>
<div class="a t k" style="left:30.3px;top:421.8px;font-size:6.9px;color:#262626">临沂市</div>
<svg class="a" style="left:18.8px;top:433.5px" width="10" height="10.5" viewBox="0 0 10 10.5">
<path d="M6 5 L9.6 4.2 L9.8 8 L6.5 9.2Z" fill="#5bb53a"/>
<path d="M0.3 6 L3.5 4.6 L6.8 5.8 L6.8 9 L3.8 10.4 L0.3 9.2Z" fill="#62aee8"/><path d="M0.3 6 L3.5 4.6 L6.8 5.8 L3.8 7.1Z" fill="#a8d4f6"/>
<path d="M3.2 2 L5.8 0.4 L8.6 1.6 L8.6 4.6 L5.8 6.2 L3.2 4.8Z" fill="#f0963a"/><path d="M3.2 2 L5.8 0.4 L8.6 1.6 L6 3.1Z" fill="#f9c07a"/>
</svg>
<div class="a t k" style="left:30.3px;top:435.4px;font-size:6.9px;color:#262626">枣庄市</div>
<svg class="a" style="left:28px;top:447.8px" width="9.2" height="9.2" viewBox="0 0 9.2 9.2">
<rect x="0.2" y="0.2" width="8.8" height="6.6" fill="#3a3a3a"/><rect x="0.9" y="0.9" width="7.4" height="5.2" fill="#bfe3f8"/>
<rect x="0.9" y="0.9" width="7.4" height="1" fill="#8aa3d8"/>
<path d="M0.9 6.1 L0.9 3.6 Q3 3 4.2 3.6 Q5 2.6 6.3 3.3 Q4.5 4.5 3.8 6.1Z" fill="#d4a82a"/><path d="M0.9 6.1 L0.9 4.6 Q2 4.2 3 5.2 L3.2 6.1Z" fill="#6a9a2a"/>
<rect x="3.8" y="6.8" width="1.6" height="1.2" fill="#333"/><rect x="2.4" y="7.9" width="4.4" height="1.1" fill="#2a2a2a"/>
</svg>
<div class="a t k" style="left:39.1px;top:449.0px;font-size:6.9px;color:#262626">山亭区</div>
<svg class="a" style="left:28px;top:461.4px" width="9.2" height="9.2" viewBox="0 0 9.2 9.2">
<rect x="0.2" y="0.2" width="8.8" height="6.6" fill="#3a3a3a"/><rect x="0.9" y="0.9" width="7.4" height="5.2" fill="#bfe3f8"/>
<rect x="0.9" y="0.9" width="7.4" height="1" fill="#8aa3d8"/>
<path d="M0.9 6.1 L0.9 3.6 Q3 3 4.2 3.6 Q5 2.6 6.3 3.3 Q4.5 4.5 3.8 6.1Z" fill="#d4a82a"/><path d="M0.9 6.1 L0.9 4.6 Q2 4.2 3 5.2 L3.2 6.1Z" fill="#6a9a2a"/>
<rect x="3.8" y="6.8" width="1.6" height="1.2" fill="#333"/><rect x="2.4" y="7.9" width="4.4" height="1.1" fill="#2a2a2a"/>
</svg>
<div class="a t k" style="left:39.1px;top:462.6px;font-size:6.9px;color:#262626">台儿庄</div>
<svg class="a" style="left:18.8px;top:474.3px" width="10" height="10.5" viewBox="0 0 10 10.5">
<path d="M6 5 L9.6 4.2 L9.8 8 L6.5 9.2Z" fill="#5bb53a"/>
<path d="M0.3 6 L3.5 4.6 L6.8 5.8 L6.8 9 L3.8 10.4 L0.3 9.2Z" fill="#62aee8"/><path d="M0.3 6 L3.5 4.6 L6.8 5.8 L3.8 7.1Z" fill="#a8d4f6"/>
<path d="M3.2 2 L5.8 0.4 L8.6 1.6 L8.6 4.6 L5.8 6.2 L3.2 4.8Z" fill="#f0963a"/><path d="M3.2 2 L5.8 0.4 L8.6 1.6 L6 3.1Z" fill="#f9c07a"/>
</svg>
<div class="a t k" style="left:30.3px;top:476.2px;font-size:6.9px;color:#262626">青岛农大</div>
<svg class="a" style="left:28px;top:488.6px" width="9.2" height="9.2" viewBox="0 0 9.2 9.2">
<rect x="0.2" y="0.2" width="8.8" height="6.6" fill="#3a3a3a"/><rect x="0.9" y="0.9" width="7.4" height="5.2" fill="#bfe3f8"/>
<rect x="0.9" y="0.9" width="7.4" height="1" fill="#8aa3d8"/>
<path d="M0.9 6.1 L0.9 3.6 Q3 3 4.2 3.6 Q5 2.6 6.3 3.3 Q4.5 4.5 3.8 6.1Z" fill="#d4a82a"/><path d="M0.9 6.1 L0.9 4.6 Q2 4.2 3 5.2 L3.2 6.1Z" fill="#6a9a2a"/>
<rect x="3.8" y="6.8" width="1.6" height="1.2" fill="#333"/><rect x="2.4" y="7.9" width="4.4" height="1.1" fill="#2a2a2a"/>
</svg>
<div class="a t k" style="left:39.1px;top:489.8px;font-size:6.9px;color:#262626">胶州示范基地</div>
<svg class="a" style="left:18.8px;top:501.5px" width="10" height="10.5" viewBox="0 0 10 10.5">
<path d="M6 5 L9.6 4.2 L9.8 8 L6.5 9.2Z" fill="#5bb53a"/>
<path d="M0.3 6 L3.5 4.6 L6.8 5.8 L6.8 9 L3.8 10.4 L0.3 9.2Z" fill="#62aee8"/><path d="M0.3 6 L3.5 4.6 L6.8 5.8 L3.8 7.1Z" fill="#a8d4f6"/>
<path d="M3.2 2 L5.8 0.4 L8.6 1.6 L8.6 4.6 L5.8 6.2 L3.2 4.8Z" fill="#f0963a"/><path d="M3.2 2 L5.8 0.4 L8.6 1.6 L6 3.1Z" fill="#f9c07a"/>
</svg>
<div class="a t k" style="left:30.3px;top:503.4px;font-size:6.9px;color:#262626">莱芜市</div>
<div class="a" style="left:123.8px;top:374px;width:4px;height:115.8px;background:#c9c9c9"></div>
<div class="a" style="left:0;top:506.4px;width:127.4px;height:2.6px;background:#fff"></div>
<div class="a" style="left:0;top:506.4px;width:118.8px;height:1.7px;background:#c9c9c9"></div>
<div class="a" style="left:127.2px;top:44.6px;width:3px;height:464px;background:#e4e4e4"></div>
<svg class="a" style="left:127px;top:271px" width="3" height="13" viewBox="0 0 3 13"><g fill="#7a7a7a"><circle cx="1.5" cy="2.0" r="0.55"/><circle cx="1.5" cy="4.4" r="0.55"/><circle cx="1.5" cy="6.8" r="0.55"/><circle cx="1.5" cy="9.2" r="0.55"/><circle cx="1.5" cy="11.6" r="0.55"/></g></svg>
<div class="a" style="left:130.3px;top:44.6px;width:948.2px;height:15px;background:linear-gradient(#fefefe,#f5f5f5);border-bottom:1px solid #dedede"></div>
<div class="a t" style="left:131px;top:48.6px;font-size:7.1px;color:#6a6a6a;font-weight:bold">详细信息 - 设备 - 墒情 - 设备ID：48042404</div>
<div class="a" style="left:132.8px;top:64.7px;width:279px;height:219.5px;background:#adacaa;border-top:1px solid #969696;border-left:1px solid #a0a0a0;border-bottom:1.6px solid #6e6e6e"></div>
<svg class="a" style="left:133px;top:65px" width="279" height="219" viewBox="133 65 279 219">
<defs>
<linearGradient id="pole" x1="0" x2="1"><stop offset="0" stop-color="#cfcfcf"/><stop offset="0.5" stop-color="#f4f4f4"/><stop offset="1" stop-color="#bdbdbd"/></linearGradient>
<linearGradient id="soil" x1="0" y1="0" x2="0" y2="1"><stop offset="0" stop-color="#1e1510"/><stop offset="0.19" stop-color="#33241a"/><stop offset="0.235" stop-color="#6e4028"/><stop offset="0.3" stop-color="#a6603a"/><stop offset="0.55" stop-color="#b06a44"/><stop offset="0.68" stop-color="#c68a64"/><stop offset="0.75" stop-color="#dcb08e"/><stop offset="1" stop-color="#e2bc9c"/></linearGradient>
<linearGradient id="soil2" x1="0" y1="0" x2="0" y2="1"><stop offset="0" stop-color="#1e140e"/><stop offset="0.2" stop-color="#3a2014"/><stop offset="0.3" stop-color="#8a3c20"/><stop offset="0.6" stop-color="#9a5030"/><stop offset="0.75" stop-color="#c89272"/><stop offset="1" stop-color="#d0a888"/></linearGradient>
</defs>
<line x1="266.4" y1="79.5" x2="266.4" y2="97" stroke="#e8e8e8" stroke-width="0.7"/>
<path d="M239.5 96.3 L286.6 96.3 L274.3 116.6 L225.2 116.6 Z" fill="#e9e9e9"/>
<path d="M225.2 116.6 L274.3 116.6 L274 118 L225.5 118 Z" fill="#c4c4c4"/>
<path d="M241.6 98.2 L261.2 98.2 L250.4 114.6 L229.4 114.6 Z" fill="#505458"/>
<path d="M263.8 98.2 L283.6 98.2 L272.6 114.6 L252.7 114.6 Z" fill="#505458"/>
<path d="M237.5 103.6 h21 M234 109.2 h21 M259.7 103.6 h21 M256.3 109.2 h21" stroke="#7a7e82" stroke-width="0.45"/>
<g fill="#dcdcdc"><circle cx="250.5" cy="101" r="0.5"/><circle cx="247" cy="106.4" r="0.5"/><circle cx="243.6" cy="111.8" r="0.5"/><circle cx="272.7" cy="101" r="0.5"/><circle cx="269.3" cy="106.4" r="0.5"/><circle cx="265.8" cy="111.8" r="0.5"/></g>
<path d="M250 117 L256 119 L262 117" stroke="#d8d8d8" stroke-width="1.2" fill="none"/>
<path d="M254.3 117.5 L258.3 117.5 L258.8 265 L253.6 265 Z" fill="url(#pole)"/>
<path d="M242.4 267 L251.8 259.8 L267.2 263.4 L257.2 270.8 Z" fill="#f0f0f0"/><path d="M242.4 267 L257.2 270.8 L257.2 272 L242.4 268.2Z" fill="#c8c8c8"/><path d="M257.2 270.8 L267.2 263.4 L267.2 264.6 L257.2 272Z" fill="#9a9a9a"/><ellipse cx="255.2" cy="265.2" rx="2.6" ry="1" fill="#d8d8d8"/>
<rect x="240.5" y="195.3" width="22.4" height="26.5" rx="0.8" fill="#262626"/>
<path d="M262.9 196 L262.9 221.5 L261.5 222 L261.5 196Z" fill="#3a3a3a"/>
<rect x="240.5" y="195.3" width="22.4" height="1" fill="#4a4a4a"/>
<rect x="244" y="199.8" width="11" height="1" fill="#b0b0b0"/><rect x="246" y="201.6" width="7" height="0.5" fill="#777"/>
<path d="M247.3 207.2 L249.3 206.6 L251.3 207.2 L251.1 210.2 L249.3 211.8 L247.5 210.2 Z" fill="#3aa84a"/>
<circle cx="257" cy="209" r="0.7" fill="#bdbdbd"/>
<rect x="243.5" y="216.5" width="13" height="1.6" fill="#555"/>
<g font-size="4.4" fill="#4a1420" font-family="Liberation Sans" font-weight="bold">
<rect x="283.8" y="207.8" width="14.6" height="5.2" fill="#c9b4b4" opacity="0.55"/><text x="284.3" y="212.0" textLength="13.4">10CM</text><rect x="283.8" y="220.1" width="14.6" height="5.2" fill="#c9b4b4" opacity="0.55"/><text x="284.3" y="224.3" textLength="13.4">20CM</text><rect x="283.8" y="232.4" width="14.6" height="5.2" fill="#c9b4b4" opacity="0.55"/><text x="284.3" y="236.6" textLength="13.4">30CM</text><rect x="283.8" y="244.7" width="14.6" height="5.2" fill="#c9b4b4" opacity="0.55"/><text x="284.3" y="248.9" textLength="13.4">40CM</text><rect x="283.8" y="256.9" width="14.6" height="5.2" fill="#c9b4b4" opacity="0.55"/><text x="284.3" y="261.1" textLength="13.4">50CM</text>
</g>
<rect x="318" y="207.9" width="7" height="5" fill="#bfbebc"/><path d="M301.6 210.4 h3" stroke="#2a2a2a" stroke-width="1"/><rect x="304.2" y="206.7" width="13.8" height="7.4" rx="1.2" fill="#262626"/><rect x="305.6" y="208.1" width="11" height="4.6" rx="0.6" fill="#d8d8d2"/><path d="M306.5 210.4 h9" stroke="#9a9a94" stroke-width="0.5"/><rect x="318" y="220.2" width="7" height="5" fill="#bfbebc"/><path d="M301.6 222.7 h3" stroke="#2a2a2a" stroke-width="1"/><rect x="304.2" y="219.0" width="13.8" height="7.4" rx="1.2" fill="#262626"/><rect x="305.6" y="220.4" width="11" height="4.6" rx="0.6" fill="#d8d8d2"/><path d="M306.5 222.7 h9" stroke="#9a9a94" stroke-width="0.5"/><rect x="318" y="232.5" width="7" height="5" fill="#bfbebc"/><path d="M301.6 235.0 h3" stroke="#2a2a2a" stroke-width="1"/><rect x="304.2" y="231.3" width="13.8" height="7.4" rx="1.2" fill="#262626"/><rect x="305.6" y="232.7" width="11" height="4.6" rx="0.6" fill="#d8d8d2"/><path d="M306.5 235.0 h9" stroke="#9a9a94" stroke-width="0.5"/><rect x="318" y="244.8" width="7" height="5" fill="#bfbebc"/><path d="M301.6 247.3 h3" stroke="#2a2a2a" stroke-width="1"/><rect x="304.2" y="243.6" width="13.8" height="7.4" rx="1.2" fill="#262626"/><rect x="305.6" y="245.0" width="11" height="4.6" rx="0.6" fill="#d8d8d2"/><path d="M306.5 247.3 h9" stroke="#9a9a94" stroke-width="0.5"/><rect x="318" y="257.0" width="7" height="5" fill="#bfbebc"/><path d="M301.6 259.5 h3" stroke="#2a2a2a" stroke-width="1"/><rect x="304.2" y="255.8" width="13.8" height="7.4" rx="1.2" fill="#262626"/><rect x="305.6" y="257.2" width="11" height="4.6" rx="0.6" fill="#d8d8d2"/><path d="M306.5 259.5 h9" stroke="#9a9a94" stroke-width="0.5"/>
<path d="M324.9 200.7 L358.2 200.7 L358.2 266.5 L324.9 266.5 Z" fill="url(#soil)"/>
<path d="M358.2 200.7 L370 195.3 L370 262 L358.2 266.5 Z" fill="url(#soil2)"/>
<path d="M324.9 200.7 L336.5 195.3 L370 195.3 L358.2 200.7 Z" fill="#4a3c1e"/>
<g fill="#e8c8a8" opacity="0.45"><ellipse cx="331" cy="251" rx="3" ry="1.3"/><ellipse cx="343" cy="257" rx="3.5" ry="1.4"/><ellipse cx="351" cy="248" rx="2.6" ry="1.1"/><ellipse cx="336" cy="262" rx="2.4" ry="1"/><ellipse cx="348" cy="262" rx="2" ry="0.9"/><ellipse cx="364" cy="252" rx="1.6" ry="1.8"/></g>
<g stroke="#3a1e10" stroke-width="0.35" opacity="0.5" fill="none"><path d="M335 216 l2 8 l-1 6 M345 216 l-1 7 l2 6 M352 218 l1 9"/></g>
<path d="M324.9 201.6 L325.5 194 L333 191 L350 190 L370 192 L370 195.5 L358.2 201.6 Z" fill="#7a7030"/><path d="M335.7 200.5 q0.2 -3.4 0.5 -5.6" stroke="#857a30" stroke-width="0.85" fill="none"/><path d="M352.3 198.3 q0.1 -3.7 0.3 -6.2" stroke="#9c8c3a" stroke-width="1.10" fill="none"/><path d="M346.2 199.2 q0.2 -3.7 0.7 -6.2" stroke="#9c8c3a" stroke-width="0.64" fill="none"/><path d="M331.8 200.5 q-0.7 -3.4 -2.4 -5.7" stroke="#8a7d32" stroke-width="0.60" fill="none"/><path d="M368.1 200.3 q0.5 -4.7 1.6 -7.8" stroke="#b3a04a" stroke-width="0.78" fill="none"/><path d="M357.3 197.7 q0.6 -4.5 2.1 -7.5" stroke="#6e6428" stroke-width="0.94" fill="none"/><path d="M351.0 198.4 q-0.2 -2.5 -0.7 -4.3" stroke="#8a7d32" stroke-width="0.58" fill="none"/><path d="M334.8 200.5 q0.2 -3.6 0.6 -5.9" stroke="#b3a04a" stroke-width="0.75" fill="none"/><path d="M362.5 198.3 q-0.1 -3.9 -0.5 -6.5" stroke="#9c8c3a" stroke-width="1.04" fill="none"/><path d="M355.7 197.8 q0.7 -5.0 2.5 -8.3" stroke="#857a30" stroke-width="0.92" fill="none"/><path d="M356.4 199.5 q0.1 -3.9 0.4 -6.5" stroke="#8a7d32" stroke-width="0.93" fill="none"/><path d="M334.5 200.5 q-0.3 -4.1 -1.1 -6.7" stroke="#8a7d32" stroke-width="0.79" fill="none"/><path d="M353.7 199.2 q-0.7 -3.3 -2.2 -5.5" stroke="#9c8c3a" stroke-width="0.51" fill="none"/><path d="M344.2 200.0 q0.2 -2.5 0.5 -4.2" stroke="#8a7d32" stroke-width="0.73" fill="none"/><path d="M351.4 199.3 q-0.3 -5.2 -1.1 -8.7" stroke="#9c8c3a" stroke-width="1.10" fill="none"/><path d="M338.9 200.5 q-0.7 -4.1 -2.3 -6.9" stroke="#9c8c3a" stroke-width="1.08" fill="none"/><path d="M338.1 200.4 q0.7 -4.4 2.4 -7.3" stroke="#b3a04a" stroke-width="0.69" fill="none"/><path d="M368.1 196.3 q-0.1 -3.4 -0.2 -5.6" stroke="#c2ae58" stroke-width="0.73" fill="none"/><path d="M364.0 197.7 q0.7 -2.4 2.4 -4.1" stroke="#c2ae58" stroke-width="0.66" fill="none"/><path d="M353.5 198.7 q-0.1 -5.2 -0.3 -8.8" stroke="#b3a04a" stroke-width="0.81" fill="none"/><path d="M349.7 200.5 q0.1 -3.5 0.4 -5.8" stroke="#8a7d32" stroke-width="0.73" fill="none"/><path d="M351.5 200.2 q-0.3 -4.2 -0.8 -7.1" stroke="#b3a04a" stroke-width="0.91" fill="none"/><path d="M340.9 200.0 q-0.7 -4.5 -2.4 -7.6" stroke="#8a7d32" stroke-width="1.07" fill="none"/><path d="M326.0 200.5 q-0.3 -4.2 -1.0 -7.0" stroke="#c2ae58" stroke-width="0.69" fill="none"/><path d="M341.4 200.3 q0.1 -3.4 0.5 -5.6" stroke="#b3a04a" stroke-width="0.97" fill="none"/><path d="M329.7 200.5 q0.3 -5.4 0.9 -9.0" stroke="#9c8c3a" stroke-width="0.69" fill="none"/><path d="M335.0 200.5 q-0.5 -2.9 -1.6 -4.8" stroke="#6e6428" stroke-width="0.89" fill="none"/><path d="M329.4 200.5 q0.3 -5.3 0.9 -8.8" stroke="#9c8c3a" stroke-width="0.76" fill="none"/><path d="M363.5 199.8 q0.2 -3.2 0.8 -5.4" stroke="#c2ae58" stroke-width="0.77" fill="none"/><path d="M335.1 200.5 q-0.5 -3.8 -1.5 -6.4" stroke="#c2ae58" stroke-width="0.61" fill="none"/><path d="M337.5 200.3 q0.5 -4.3 1.5 -7.1" stroke="#b3a04a" stroke-width="0.85" fill="none"/><path d="M344.0 199.9 q-0.1 -5.0 -0.2 -8.3" stroke="#857a30" stroke-width="0.75" fill="none"/><path d="M343.9 200.0 q-0.5 -5.2 -1.7 -8.7" stroke="#8a7d32" stroke-width="0.79" fill="none"/><path d="M362.5 198.1 q0.1 -3.8 0.3 -6.4" stroke="#857a30" stroke-width="0.63" fill="none"/><path d="M358.5 197.7 q0.0 -4.3 0.1 -7.2" stroke="#b3a04a" stroke-width="0.83" fill="none"/><path d="M365.0 196.8 q0.7 -5.0 2.4 -8.3" stroke="#8a7d32" stroke-width="0.99" fill="none"/><path d="M327.0 200.5 q0.6 -4.4 2.1 -7.3" stroke="#6e6428" stroke-width="0.85" fill="none"/><path d="M325.6 200.5 q-0.3 -2.7 -1.0 -4.5" stroke="#857a30" stroke-width="0.51" fill="none"/><path d="M349.2 200.4 q-0.6 -5.2 -1.9 -8.6" stroke="#9c8c3a" stroke-width="0.65" fill="none"/><path d="M363.8 198.6 q-0.2 -4.8 -0.7 -7.9" stroke="#9c8c3a" stroke-width="0.57" fill="none"/><path d="M364.9 200.0 q-0.3 -2.9 -1.1 -4.8" stroke="#9c8c3a" stroke-width="0.99" fill="none"/><path d="M325.3 200.5 q-0.7 -5.0 -2.3 -8.3" stroke="#b3a04a" stroke-width="0.65" fill="none"/><path d="M352.8 199.2 q-0.3 -2.2 -0.9 -3.8" stroke="#8a7d32" stroke-width="1.01" fill="none"/><path d="M359.9 200.3 q-0.0 -2.2 -0.1 -3.8" stroke="#8a7d32" stroke-width="1.01" fill="none"/><path d="M328.9 200.5 q-0.3 -3.1 -0.9 -5.2" stroke="#b3a04a" stroke-width="0.73" fill="none"/><path d="M342.5 200.2 q0.7 -3.0 2.4 -5.0" stroke="#6e6428" stroke-width="0.57" fill="none"/><path d="M350.0 199.0 q-0.6 -3.4 -2.1 -5.6" stroke="#9c8c3a" stroke-width="0.53" fill="none"/><path d="M345.7 199.6 q0.2 -3.9 0.7 -6.5" stroke="#8a7d32" stroke-width="0.87" fill="none"/><path d="M344.4 200.0 q0.3 -3.8 1.0 -6.3" stroke="#6e6428" stroke-width="1.07" fill="none"/><path d="M343.8 200.5 q-0.3 -2.8 -1.1 -4.7" stroke="#c2ae58" stroke-width="0.54" fill="none"/><path d="M344.1 200.0 q0.7 -5.0 2.2 -8.4" stroke="#b3a04a" stroke-width="1.08" fill="none"/><path d="M350.2 198.7 q0.3 -2.5 1.0 -4.2" stroke="#857a30" stroke-width="0.90" fill="none"/><path d="M364.9 197.1 q0.4 -4.3 1.2 -7.2" stroke="#c2ae58" stroke-width="0.82" fill="none"/><path d="M361.5 197.8 q-0.4 -3.7 -1.3 -6.2" stroke="#6e6428" stroke-width="0.53" fill="none"/><path d="M329.1 200.5 q-0.5 -5.0 -1.6 -8.4" stroke="#8a7d32" stroke-width="0.70" fill="none"/><path d="M363.4 200.4 q-0.0 -2.5 -0.1 -4.1" stroke="#857a30" stroke-width="1.07" fill="none"/><path d="M351.1 198.7 q0.4 -2.2 1.3 -3.7" stroke="#c2ae58" stroke-width="0.82" fill="none"/><path d="M335.7 200.5 q0.1 -2.4 0.3 -4.1" stroke="#c2ae58" stroke-width="0.69" fill="none"/><path d="M350.4 198.7 q-0.5 -2.9 -1.6 -4.8" stroke="#9c8c3a" stroke-width="0.77" fill="none"/><path d="M356.5 197.7 q0.1 -2.9 0.5 -4.9" stroke="#b3a04a" stroke-width="0.83" fill="none"/><path d="M368.5 198.7 q0.6 -2.9 2.1 -4.8" stroke="#857a30" stroke-width="1.08" fill="none"/><path d="M343.7 199.9 q0.6 -4.1 2.1 -6.7" stroke="#857a30" stroke-width="0.79" fill="none"/><path d="M353.9 198.1 q-0.6 -2.6 -2.0 -4.3" stroke="#857a30" stroke-width="0.79" fill="none"/><path d="M356.4 197.6 q0.5 -4.1 1.8 -6.8" stroke="#9c8c3a" stroke-width="0.66" fill="none"/><path d="M334.0 200.5 q-0.4 -3.1 -1.3 -5.2" stroke="#857a30" stroke-width="0.82" fill="none"/><path d="M360.1 198.1 q0.1 -5.0 0.5 -8.3" stroke="#c2ae58" stroke-width="0.85" fill="none"/><path d="M337.0 200.5 q-0.0 -2.2 -0.1 -3.6" stroke="#6e6428" stroke-width="0.62" fill="none"/><path d="M350.6 200.0 q0.5 -3.7 1.8 -6.2" stroke="#6e6428" stroke-width="1.09" fill="none"/><path d="M346.6 199.6 q0.5 -3.6 1.7 -6.1" stroke="#857a30" stroke-width="0.83" fill="none"/><path d="M346.7 199.4 q-0.1 -5.0 -0.5 -8.3" stroke="#857a30" stroke-width="1.03" fill="none"/>
<path d="M326 201 Q336 197 358 199" stroke="#5a5020" stroke-width="1.2" fill="none" opacity="0.6"/>
</svg>
<div class="a" style="left:414.4px;top:64.5px;width:659.6px;height:220.1px;background:#fff;border-left:1.2px solid #c8c8c8;border-top:1px solid #d0d0d0;border-right:1px solid #a8a8a8;border-bottom:1.8px solid #7a7a7a"></div>
<div class="a t" style="left:443.3px;top:71.3px;font-size:7px;color:#444">开始时间:</div>
<div class="a" style="left:480.5px;top:68.4px;width:71px;height:13.3px;border:1px solid #b8b8b8;border-radius:4px;background:#fff"></div>
<div class="a t" style="left:497px;top:71.2px;font-size:7.3px;color:#333">2020-07-01</div>
<div class="a t" style="left:555.5px;top:71.3px;font-size:7px;color:#444">结束时间:</div>
<div class="a" style="left:593.5px;top:68.4px;width:70px;height:13.3px;border:1px solid #b8b8b8;border-radius:4px;background:#fff"></div>
<div class="a t" style="left:609.6px;top:71.2px;font-size:7.3px;color:#333">2020-08-24</div>
<svg class="a" style="left:540.0px;top:71.4px" width="8.5" height="7.2" viewBox="0 0 8.5 7.2"><rect x="0" y="0" width="8.5" height="7.2" fill="#555"/><path d="M0 1.6h8.5M0 3.4h8.5M0 5.2h8.5M2.1 1.6v5.6M4.2 1.6v5.6M6.3 1.6v5.6" stroke="#fff" stroke-width="0.55"/><rect x="0.6" y="0.5" width="7.3" height="0.6" fill="#888"/></svg>
<svg class="a" style="left:652.8px;top:71.4px" width="8.5" height="7.2" viewBox="0 0 8.5 7.2"><rect x="0" y="0" width="8.5" height="7.2" fill="#555"/><path d="M0 1.6h8.5M0 3.4h8.5M0 5.2h8.5M2.1 1.6v5.6M4.2 1.6v5.6M6.3 1.6v5.6" stroke="#fff" stroke-width="0.55"/><rect x="0.6" y="0.5" width="7.3" height="0.6" fill="#888"/></svg>
<div class="a" style="left:672.4px;top:68.5px;width:32.8px;height:13px;border:1px solid #b0b0b0;border-radius:3px;background:linear-gradient(#fdfdfd,#e9e9e9);font-size:7.2px;text-align:center;line-height:11.2px;color:#333;letter-spacing:2px;padding-left:2px">应用</div>
<div class="a" style="left:716.3px;top:68.5px;width:56px;height:13px;border:1px solid #b0b0b0;border-radius:3px;background:linear-gradient(#fdfdfd,#e9e9e9);font-size:7.2px;text-align:center;line-height:11.2px;color:#333;letter-spacing:2px;padding-left:2px">信息统计</div>
<div class="a" style="left:778px;top:66px;width:0.8px;height:18.5px;background:#ececec"></div>
<div class="a" style="left:415.6px;top:85px;width:657.4px;height:15.5px;background:linear-gradient(#f8f8f8,#efefef);border-top:1px solid #cfcfcf;border-bottom:1px solid #dcdcdc"></div>
<div class="a" style="left:435.4px;top:85.5px;width:0.9px;height:15px;background:#dadada"></div>
<div class="a" style="left:488.5px;top:85.5px;width:0.9px;height:15px;background:#dadada"></div>
<div class="a" style="left:541.7px;top:85.5px;width:0.9px;height:15px;background:#dadada"></div>
<div class="a" style="left:595.4px;top:85.5px;width:0.9px;height:15px;background:#dadada"></div>
<div class="a" style="left:648.4px;top:85.5px;width:0.9px;height:15px;background:#dadada"></div>
<div class="a" style="left:702.3px;top:85.5px;width:0.9px;height:15px;background:#dadada"></div>
<div class="a" style="left:755.3px;top:85.5px;width:0.9px;height:15px;background:#dadada"></div>
<div class="a" style="left:842.3px;top:85.5px;width:0.9px;height:15px;background:#dadada"></div>
<div class="a t" style="left:435.4px;top:89.9px;width:53.1px;text-align:center;font-size:6.7px;color:#333">土壤温度(层1)</div>
<div class="a t" style="left:488.5px;top:89.9px;width:53.2px;text-align:center;font-size:6.7px;color:#333">土壤湿度(层1)</div>
<div class="a t" style="left:541.7px;top:89.9px;width:53.7px;text-align:center;font-size:6.7px;color:#333">土壤温度(层2)</div>
<div class="a t" style="left:595.4px;top:89.9px;width:53.0px;text-align:center;font-size:6.7px;color:#333">土壤湿度(层2)</div>
<div class="a t" style="left:648.4px;top:89.9px;width:53.9px;text-align:center;font-size:6.7px;color:#333">土壤温度(层3)</div>
<div class="a t" style="left:702.3px;top:89.9px;width:53.0px;text-align:center;font-size:6.7px;color:#333">土壤湿度(层3)</div>
<div class="a t" style="left:755.3px;top:89.9px;width:87.0px;text-align:center;font-size:6.7px;color:#333">采集时间</div>
<div class="a" style="left:415.6px;top:100.5px;width:19.8px;height:152px;background:#f6f6f6"></div>
<div class="a t k" style="left:415.6px;top:103.90px;width:19.8px;text-align:center;font-size:7px;color:#333">1</div>
<div class="a t k" style="left:435.4px;top:103.90px;width:53.1px;text-align:center;font-size:7px;color:#333">25</div>
<div class="a t k" style="left:488.5px;top:103.90px;width:53.2px;text-align:center;font-size:7px;color:#333">27%</div>
<div class="a t k" style="left:541.7px;top:103.90px;width:53.7px;text-align:center;font-size:7px;color:#333">26</div>
<div class="a t k" style="left:595.4px;top:103.90px;width:53.0px;text-align:center;font-size:7px;color:#333">24%</div>
<div class="a t k" style="left:648.4px;top:103.90px;width:53.9px;text-align:center;font-size:7px;color:#333">26</div>
<div class="a t k" style="left:702.3px;top:103.90px;width:53.0px;text-align:center;font-size:7px;color:#333">19%</div>
<div class="a t k" style="left:755.3px;top:103.90px;width:87.0px;text-align:center;font-size:7px;color:#333">2020-08-08 11:12:01.813</div>
<div class="a" style="left:435.4px;top:112.85px;width:406.9px;height:12.35px;background:#f2f2ee"></div>
<div class="a t k" style="left:415.6px;top:116.25px;width:19.8px;text-align:center;font-size:7px;color:#333">2</div>
<div class="a t k" style="left:435.4px;top:116.25px;width:53.1px;text-align:center;font-size:7px;color:#333">24</div>
<div class="a t k" style="left:488.5px;top:116.25px;width:53.2px;text-align:center;font-size:7px;color:#333">27%</div>
<div class="a t k" style="left:541.7px;top:116.25px;width:53.7px;text-align:center;font-size:7px;color:#333">26</div>
<div class="a t k" style="left:595.4px;top:116.25px;width:53.0px;text-align:center;font-size:7px;color:#333">24%</div>
<div class="a t k" style="left:648.4px;top:116.25px;width:53.9px;text-align:center;font-size:7px;color:#333">26</div>
<div class="a t k" style="left:702.3px;top:116.25px;width:53.0px;text-align:center;font-size:7px;color:#333">19%</div>
<div class="a t k" style="left:755.3px;top:116.25px;width:87.0px;text-align:center;font-size:7px;color:#333">2020-08-08 10:56:12.657</div>
<div class="a t k" style="left:415.6px;top:128.60px;width:19.8px;text-align:center;font-size:7px;color:#333">3</div>
<div class="a t k" style="left:435.4px;top:128.60px;width:53.1px;text-align:center;font-size:7px;color:#333">24</div>
<div class="a t k" style="left:488.5px;top:128.60px;width:53.2px;text-align:center;font-size:7px;color:#333">27%</div>
<div class="a t k" style="left:541.7px;top:128.60px;width:53.7px;text-align:center;font-size:7px;color:#333">26</div>
<div class="a t k" style="left:595.4px;top:128.60px;width:53.0px;text-align:center;font-size:7px;color:#333">24%</div>
<div class="a t k" style="left:648.4px;top:128.60px;width:53.9px;text-align:center;font-size:7px;color:#333">26</div>
<div class="a t k" style="left:702.3px;top:128.60px;width:53.0px;text-align:center;font-size:7px;color:#333">19%</div>
<div class="a t k" style="left:755.3px;top:128.60px;width:87.0px;text-align:center;font-size:7px;color:#333">2020-08-08 10:06:01.72</div>
<div class="a" style="left:435.4px;top:137.55px;width:406.9px;height:12.35px;background:#f2f2ee"></div>
<div class="a t k" style="left:415.6px;top:140.95px;width:19.8px;text-align:center;font-size:7px;color:#333">4</div>
<div class="a t k" style="left:435.4px;top:140.95px;width:53.1px;text-align:center;font-size:7px;color:#333">24</div>
<div class="a t k" style="left:488.5px;top:140.95px;width:53.2px;text-align:center;font-size:7px;color:#333">27%</div>
<div class="a t k" style="left:541.7px;top:140.95px;width:53.7px;text-align:center;font-size:7px;color:#333">26</div>
<div class="a t k" style="left:595.4px;top:140.95px;width:53.0px;text-align:center;font-size:7px;color:#333">24%</div>
<div class="a t k" style="left:648.4px;top:140.95px;width:53.9px;text-align:center;font-size:7px;color:#333">26</div>
<div class="a t k" style="left:702.3px;top:140.95px;width:53.0px;text-align:center;font-size:7px;color:#333">19%</div>
<div class="a t k" style="left:755.3px;top:140.95px;width:87.0px;text-align:center;font-size:7px;color:#333">2020-08-08 10:05:01.763</div>
<div class="a t k" style="left:415.6px;top:153.30px;width:19.8px;text-align:center;font-size:7px;color:#333">5</div>
<div class="a t k" style="left:435.4px;top:153.30px;width:53.1px;text-align:center;font-size:7px;color:#333">24</div>
<div class="a t k" style="left:488.5px;top:153.30px;width:53.2px;text-align:center;font-size:7px;color:#333">27%</div>
<div class="a t k" style="left:541.7px;top:153.30px;width:53.7px;text-align:center;font-size:7px;color:#333">26</div>
<div class="a t k" style="left:595.4px;top:153.30px;width:53.0px;text-align:center;font-size:7px;color:#333">24%</div>
<div class="a t k" style="left:648.4px;top:153.30px;width:53.9px;text-align:center;font-size:7px;color:#333">26</div>
<div class="a t k" style="left:702.3px;top:153.30px;width:53.0px;text-align:center;font-size:7px;color:#333">19%</div>
<div class="a t k" style="left:755.3px;top:153.30px;width:87.0px;text-align:center;font-size:7px;color:#333">2020-08-08 10:04:01.75</div>
<div class="a" style="left:435.4px;top:162.25px;width:406.9px;height:12.35px;background:#f2f2ee"></div>
<div class="a t k" style="left:415.6px;top:165.65px;width:19.8px;text-align:center;font-size:7px;color:#333">6</div>
<div class="a t k" style="left:435.4px;top:165.65px;width:53.1px;text-align:center;font-size:7px;color:#333">24</div>
<div class="a t k" style="left:488.5px;top:165.65px;width:53.2px;text-align:center;font-size:7px;color:#333">27%</div>
<div class="a t k" style="left:541.7px;top:165.65px;width:53.7px;text-align:center;font-size:7px;color:#333">25</div>
<div class="a t k" style="left:595.4px;top:165.65px;width:53.0px;text-align:center;font-size:7px;color:#333">24%</div>
<div class="a t k" style="left:648.4px;top:165.65px;width:53.9px;text-align:center;font-size:7px;color:#333">26</div>
<div class="a t k" style="left:702.3px;top:165.65px;width:53.0px;text-align:center;font-size:7px;color:#333">19%</div>
<div class="a t k" style="left:755.3px;top:165.65px;width:87.0px;text-align:center;font-size:7px;color:#333">2020-08-08 10:04:00.76</div>
<div class="a t k" style="left:415.6px;top:178.00px;width:19.8px;text-align:center;font-size:7px;color:#333">7</div>
<div class="a t k" style="left:435.4px;top:178.00px;width:53.1px;text-align:center;font-size:7px;color:#333">24</div>
<div class="a t k" style="left:488.5px;top:178.00px;width:53.2px;text-align:center;font-size:7px;color:#333">27%</div>
<div class="a t k" style="left:541.7px;top:178.00px;width:53.7px;text-align:center;font-size:7px;color:#333">25</div>
<div class="a t k" style="left:595.4px;top:178.00px;width:53.0px;text-align:center;font-size:7px;color:#333">24%</div>
<div class="a t k" style="left:648.4px;top:178.00px;width:53.9px;text-align:center;font-size:7px;color:#333">26</div>
<div class="a t k" style="left:702.3px;top:178.00px;width:53.0px;text-align:center;font-size:7px;color:#333">19%</div>
<div class="a t k" style="left:755.3px;top:178.00px;width:87.0px;text-align:center;font-size:7px;color:#333">2020-08-08 09:57:01.76</div>
<div class="a" style="left:435.4px;top:186.95px;width:406.9px;height:12.35px;background:#f2f2ee"></div>
<div class="a t k" style="left:415.6px;top:190.35px;width:19.8px;text-align:center;font-size:7px;color:#333">8</div>
<div class="a t k" style="left:435.4px;top:190.35px;width:53.1px;text-align:center;font-size:7px;color:#333">24</div>
<div class="a t k" style="left:488.5px;top:190.35px;width:53.2px;text-align:center;font-size:7px;color:#333">27%</div>
<div class="a t k" style="left:541.7px;top:190.35px;width:53.7px;text-align:center;font-size:7px;color:#333">26</div>
<div class="a t k" style="left:595.4px;top:190.35px;width:53.0px;text-align:center;font-size:7px;color:#333">24%</div>
<div class="a t k" style="left:648.4px;top:190.35px;width:53.9px;text-align:center;font-size:7px;color:#333">26</div>
<div class="a t k" style="left:702.3px;top:190.35px;width:53.0px;text-align:center;font-size:7px;color:#333">19%</div>
<div class="a t k" style="left:755.3px;top:190.35px;width:87.0px;text-align:center;font-size:7px;color:#333">2020-08-08 09:56:01.747</div>
<div class="a t k" style="left:415.6px;top:202.70px;width:19.8px;text-align:center;font-size:7px;color:#333">9</div>
<div class="a t k" style="left:435.4px;top:202.70px;width:53.1px;text-align:center;font-size:7px;color:#333">24</div>
<div class="a t k" style="left:488.5px;top:202.70px;width:53.2px;text-align:center;font-size:7px;color:#333">27%</div>
<div class="a t k" style="left:541.7px;top:202.70px;width:53.7px;text-align:center;font-size:7px;color:#333">25</div>
<div class="a t k" style="left:595.4px;top:202.70px;width:53.0px;text-align:center;font-size:7px;color:#333">24%</div>
<div class="a t k" style="left:648.4px;top:202.70px;width:53.9px;text-align:center;font-size:7px;color:#333">26</div>
<div class="a t k" style="left:702.3px;top:202.70px;width:53.0px;text-align:center;font-size:7px;color:#333">19%</div>
<div class="a t k" style="left:755.3px;top:202.70px;width:87.0px;text-align:center;font-size:7px;color:#333">2020-08-08 09:55:01.73</div>
<div class="a" style="left:435.4px;top:211.65px;width:406.9px;height:12.35px;background:#f2f2ee"></div>
<div class="a t k" style="left:415.6px;top:215.05px;width:19.8px;text-align:center;font-size:7px;color:#333">10</div>
<div class="a t k" style="left:435.4px;top:215.05px;width:53.1px;text-align:center;font-size:7px;color:#333">24</div>
<div class="a t k" style="left:488.5px;top:215.05px;width:53.2px;text-align:center;font-size:7px;color:#333">27%</div>
<div class="a t k" style="left:541.7px;top:215.05px;width:53.7px;text-align:center;font-size:7px;color:#333">26</div>
<div class="a t k" style="left:595.4px;top:215.05px;width:53.0px;text-align:center;font-size:7px;color:#333">24%</div>
<div class="a t k" style="left:648.4px;top:215.05px;width:53.9px;text-align:center;font-size:7px;color:#333">25</div>
<div class="a t k" style="left:702.3px;top:215.05px;width:53.0px;text-align:center;font-size:7px;color:#333">19%</div>
<div class="a t k" style="left:755.3px;top:215.05px;width:87.0px;text-align:center;font-size:7px;color:#333">2020-08-08 09:54:01.7</div>
<div class="a t k" style="left:415.6px;top:227.40px;width:19.8px;text-align:center;font-size:7px;color:#333">11</div>
<div class="a t k" style="left:435.4px;top:227.40px;width:53.1px;text-align:center;font-size:7px;color:#333">24</div>
<div class="a t k" style="left:488.5px;top:227.40px;width:53.2px;text-align:center;font-size:7px;color:#333">27%</div>
<div class="a t k" style="left:541.7px;top:227.40px;width:53.7px;text-align:center;font-size:7px;color:#333">26</div>
<div class="a t k" style="left:595.4px;top:227.40px;width:53.0px;text-align:center;font-size:7px;color:#333">24%</div>
<div class="a t k" style="left:648.4px;top:227.40px;width:53.9px;text-align:center;font-size:7px;color:#333">26</div>
<div class="a t k" style="left:702.3px;top:227.40px;width:53.0px;text-align:center;font-size:7px;color:#333">19%</div>
<div class="a t k" style="left:755.3px;top:227.40px;width:87.0px;text-align:center;font-size:7px;color:#333">2020-08-08 09:53:01.74</div>
<div class="a" style="left:435.4px;top:236.35px;width:406.9px;height:12.35px;background:#f2f2ee"></div>
<div class="a t k" style="left:415.6px;top:239.75px;width:19.8px;text-align:center;font-size:7px;color:#333">12</div>
<div class="a t k" style="left:435.4px;top:239.75px;width:53.1px;text-align:center;font-size:7px;color:#333">24</div>
<div class="a t k" style="left:488.5px;top:239.75px;width:53.2px;text-align:center;font-size:7px;color:#333">27%</div>
<div class="a t k" style="left:541.7px;top:239.75px;width:53.7px;text-align:center;font-size:7px;color:#333">26</div>
<div class="a t k" style="left:595.4px;top:239.75px;width:53.0px;text-align:center;font-size:7px;color:#333">24%</div>
<div class="a t k" style="left:648.4px;top:239.75px;width:53.9px;text-align:center;font-size:7px;color:#333">26</div>
<div class="a t k" style="left:702.3px;top:239.75px;width:53.0px;text-align:center;font-size:7px;color:#333">19%</div>
<div class="a t k" style="left:755.3px;top:239.75px;width:87.0px;text-align:center;font-size:7px;color:#333">2020-08-08 09:52:01.757</div>
<div class="a" style="left:488.5px;top:100.5px;width:0.8px;height:151.8px;background:#e0e0e0"></div>
<div class="a" style="left:541.7px;top:100.5px;width:0.8px;height:151.8px;background:#e0e0e0"></div>
<div class="a" style="left:595.4px;top:100.5px;width:0.8px;height:151.8px;background:#e0e0e0"></div>
<div class="a" style="left:648.4px;top:100.5px;width:0.8px;height:151.8px;background:#e0e0e0"></div>
<div class="a" style="left:702.3px;top:100.5px;width:0.8px;height:151.8px;background:#e0e0e0"></div>
<div class="a" style="left:755.3px;top:100.5px;width:0.8px;height:151.8px;background:#e0e0e0"></div>
<div class="a" style="left:842.3px;top:100.5px;width:0.8px;height:151.8px;background:#e0e0e0"></div>
<div class="a" style="left:1069.3px;top:100.5px;width:3.8px;height:151.8px;background:#f1f1f1"></div>
<div class="a" style="left:1069.3px;top:100.5px;width:3.8px;height:17.8px;background:#c6c6c6"></div>
<div class="a" style="left:415.6px;top:252.3px;width:657.4px;height:14.3px;background:#f4f4f4;border-top:1px solid #dcdcdc;border-bottom:1px solid #e2e2e2"></div>
<svg class="a" style="left:420px;top:255.8px" width="140" height="8" viewBox="420 255.8 140 8"><g fill="#c4c8d0"><rect x="421" y="256.6" width="1.1" height="6.4"/><path d="M426 256.6 V263 L422.3 259.8Z"/><path d="M440 256.6 V263 L436.2 259.8Z"/><path d="M538 256.6 V263 L541.8 259.8Z"/><path d="M552 256.6 V263 L555.8 259.8Z"/><rect x="555.9" y="256.6" width="1.1" height="6.4"/></g></svg>
<div class="a" style="left:447px;top:254.6px;width:0.8px;height:10.5px;background:#d8d8d8"></div>
<div class="a" style="left:530.3px;top:254.6px;width:0.8px;height:10.5px;background:#d8d8d8"></div>
<div class="a t" style="left:452.5px;top:256.3px;font-size:7px;color:#444">第</div>
<div class="a" style="left:463.6px;top:254.3px;width:21.7px;height:11.7px;border:1px solid #d0d0d0;border-radius:3px;background:#fff;font-size:7px;text-align:center;line-height:9.6px;color:#333">1</div>
<div class="a t" style="left:490px;top:256.3px;font-size:7px;color:#444">页 / 共 1 页</div>
<div class="a" style="left:566.2px;top:254.3px;width:30.2px;height:12.1px;border:1px solid #d6d6d6;background:#fff"></div>
<div class="a t" style="left:568.6px;top:256.2px;font-size:7.4px;color:#333">100</div>
<svg class="a" style="left:588px;top:258px" width="6" height="4" viewBox="0 0 6 4"><path d="M0.6 0.6 L3 3 L5.4 0.6" stroke="#222" stroke-width="1" fill="none"/></svg>
<div class="a t" style="left:602px;top:256.3px;font-size:7px;color:#444">检索到 39583 条记录，显示 第 1 条 - 第 100 条</div>
<div class="a" style="left:132.8px;top:287.3px;width:941.2px;height:218.8px;background:#fff;border:1px solid #cfcfcf;border-bottom:1.6px solid #3a3a3a"></div>
<svg class="a" style="left:0;top:0" width="1080" height="527" viewBox="0 0 1080 527">
<line x1="161" y1="478.30" x2="1068" y2="478.30" stroke="#e6e6e6" stroke-width="0.8"/>
<line x1="161" y1="454.49" x2="1068" y2="454.49" stroke="#e6e6e6" stroke-width="0.8"/>
<line x1="161" y1="430.68" x2="1068" y2="430.68" stroke="#e6e6e6" stroke-width="0.8"/>
<line x1="161" y1="406.87" x2="1068" y2="406.87" stroke="#e6e6e6" stroke-width="0.8"/>
<line x1="161" y1="383.06" x2="1068" y2="383.06" stroke="#e6e6e6" stroke-width="0.8"/>
<line x1="161" y1="359.25" x2="1068" y2="359.25" stroke="#e6e6e6" stroke-width="0.8"/>
<line x1="161" y1="335.44" x2="1068" y2="335.44" stroke="#e6e6e6" stroke-width="0.8"/>
<line x1="161" y1="311.63" x2="1068" y2="311.63" stroke="#e6e6e6" stroke-width="0.8"/>
<line x1="161" y1="485.4" x2="1068" y2="485.4" stroke="#ccd6eb" stroke-width="0.8"/>
<text x="152.5" y="481.30" text-anchor="end" font-size="6.8" fill="#666" font-family="Liberation Sans">20</text>
<text x="152.5" y="457.49" text-anchor="end" font-size="6.8" fill="#666" font-family="Liberation Sans">22.5</text>
<text x="152.5" y="433.68" text-anchor="end" font-size="6.8" fill="#666" font-family="Liberation Sans">25</text>
<text x="152.5" y="409.87" text-anchor="end" font-size="6.8" fill="#666" font-family="Liberation Sans">27.5</text>
<text x="152.5" y="386.06" text-anchor="end" font-size="6.8" fill="#666" font-family="Liberation Sans">30</text>
<text x="152.5" y="362.25" text-anchor="end" font-size="6.8" fill="#666" font-family="Liberation Sans">32.5</text>
<text x="152.5" y="338.44" text-anchor="end" font-size="6.8" fill="#666" font-family="Liberation Sans">35</text>
<text x="152.5" y="314.63" text-anchor="end" font-size="6.8" fill="#666" font-family="Liberation Sans">37.5</text>
<line x1="192.70" y1="485.4" x2="192.70" y2="490" stroke="#ccd6eb" stroke-width="0.8"/>
<text x="192.70" y="495.8" text-anchor="middle" font-size="6.8" fill="#666" font-family="Liberation Sans">07-02</text>
<line x1="238.94" y1="485.4" x2="238.94" y2="490" stroke="#ccd6eb" stroke-width="0.8"/>
<text x="238.94" y="495.8" text-anchor="middle" font-size="6.8" fill="#666" font-family="Liberation Sans">07-04</text>
<line x1="285.18" y1="485.4" x2="285.18" y2="490" stroke="#ccd6eb" stroke-width="0.8"/>
<text x="285.18" y="495.8" text-anchor="middle" font-size="6.8" fill="#666" font-family="Liberation Sans">07-06</text>
<line x1="331.42" y1="485.4" x2="331.42" y2="490" stroke="#ccd6eb" stroke-width="0.8"/>
<text x="331.42" y="495.8" text-anchor="middle" font-size="6.8" fill="#666" font-family="Liberation Sans">07-08</text>
<line x1="377.66" y1="485.4" x2="377.66" y2="490" stroke="#ccd6eb" stroke-width="0.8"/>
<text x="377.66" y="495.8" text-anchor="middle" font-size="6.8" fill="#666" font-family="Liberation Sans">07-10</text>
<line x1="423.90" y1="485.4" x2="423.90" y2="490" stroke="#ccd6eb" stroke-width="0.8"/>
<text x="423.90" y="495.8" text-anchor="middle" font-size="6.8" fill="#666" font-family="Liberation Sans">07-12</text>
<line x1="470.14" y1="485.4" x2="470.14" y2="490" stroke="#ccd6eb" stroke-width="0.8"/>
<text x="470.14" y="495.8" text-anchor="middle" font-size="6.8" fill="#666" font-family="Liberation Sans">07-14</text>
<line x1="516.38" y1="485.4" x2="516.38" y2="490" stroke="#ccd6eb" stroke-width="0.8"/>
<text x="516.38" y="495.8" text-anchor="middle" font-size="6.8" fill="#666" font-family="Liberation Sans">07-16</text>
<line x1="562.62" y1="485.4" x2="562.62" y2="490" stroke="#ccd6eb" stroke-width="0.8"/>
<text x="562.62" y="495.8" text-anchor="middle" font-size="6.8" fill="#666" font-family="Liberation Sans">07-18</text>
<line x1="608.86" y1="485.4" x2="608.86" y2="490" stroke="#ccd6eb" stroke-width="0.8"/>
<text x="608.86" y="495.8" text-anchor="middle" font-size="6.8" fill="#666" font-family="Liberation Sans">07-20</text>
<line x1="655.10" y1="485.4" x2="655.10" y2="490" stroke="#ccd6eb" stroke-width="0.8"/>
<text x="655.10" y="495.8" text-anchor="middle" font-size="6.8" fill="#666" font-family="Liberation Sans">07-22</text>
<line x1="701.34" y1="485.4" x2="701.34" y2="490" stroke="#ccd6eb" stroke-width="0.8"/>
<text x="701.34" y="495.8" text-anchor="middle" font-size="6.8" fill="#666" font-family="Liberation Sans">07-24</text>
<line x1="747.58" y1="485.4" x2="747.58" y2="490" stroke="#ccd6eb" stroke-width="0.8"/>
<text x="747.58" y="495.8" text-anchor="middle" font-size="6.8" fill="#666" font-family="Liberation Sans">07-26</text>
<line x1="793.82" y1="485.4" x2="793.82" y2="490" stroke="#ccd6eb" stroke-width="0.8"/>
<text x="793.82" y="495.8" text-anchor="middle" font-size="6.8" fill="#666" font-family="Liberation Sans">07-28</text>
<line x1="840.06" y1="485.4" x2="840.06" y2="490" stroke="#ccd6eb" stroke-width="0.8"/>
<text x="840.06" y="495.8" text-anchor="middle" font-size="6.8" fill="#666" font-family="Liberation Sans">07-30</text>
<line x1="886.30" y1="485.4" x2="886.30" y2="490" stroke="#ccd6eb" stroke-width="0.8"/>
<text x="886.30" y="495.8" text-anchor="middle" font-size="6.8" fill="#666" font-family="Liberation Sans">08-01</text>
<line x1="932.54" y1="485.4" x2="932.54" y2="490" stroke="#ccd6eb" stroke-width="0.8"/>
<text x="932.54" y="495.8" text-anchor="middle" font-size="6.8" fill="#666" font-family="Liberation Sans">08-03</text>
<line x1="978.78" y1="485.4" x2="978.78" y2="490" stroke="#ccd6eb" stroke-width="0.8"/>
<text x="978.78" y="495.8" text-anchor="middle" font-size="6.8" fill="#666" font-family="Liberation Sans">08-05</text>
<line x1="1025.02" y1="485.4" x2="1025.02" y2="490" stroke="#ccd6eb" stroke-width="0.8"/>
<text x="1025.02" y="495.8" text-anchor="middle" font-size="6.8" fill="#666" font-family="Liberation Sans">08-07</text>
<text x="603.3" y="305.3" text-anchor="middle" font-size="7.2" fill="#333" font-family="Liberation Sans">土壤墒情设备数据</text>
<path d="M169.7 449.7 H171.5 H171.8 V459.2 H172.2 H172.6 V468.8 H172.9 H176.1 H176.4 V459.2 H176.8 H177.2 V449.7 H177.7 H177.9 V440.2 H178.3 V430.7 H178.8 V421.1 H179.2 V411.6 H179.6 V402.1 H180.0 V392.6 H180.4 V383.1 H180.9 V373.5 H181.3 V364.0 H181.7 V354.5 H182.1 V345.0 H182.6 V335.4 H183.0 V325.9 H183.2 H184.2 H184.6 V335.4 H185.3 V345.0 H186.1 V354.5 H186.8 V364.0 H187.6 V373.5 H188.3 V383.1 H189.1 V392.6 H189.8 V402.1 H190.6 V411.6 H191.3 V421.1 H192.1 V430.7 H192.8 V440.2 H193.2 H195.5 H195.9 V449.7 H196.7 V459.2 H197.1 H198.7 H199.0 V449.7 H199.6 V440.2 H200.1 V430.7 H200.7 V421.1 H201.3 V411.6 H201.9 V402.1 H202.5 V392.6 H203.1 V383.1 H203.6 V373.5 H204.2 V364.0 H204.5 H205.0 H205.2 V373.5 H205.6 V383.1 H206.1 V392.6 H206.5 V402.1 H206.9 V411.6 H207.3 V421.1 H207.8 V430.7 H208.2 V440.2 H208.4 H214.8 H215.7 V449.7 H216.5 H218.0 H218.4 V459.2 H219.2 V468.8 H219.9 V478.3 H220.3 H224.5 H224.7 V468.8 H225.1 V459.2 H225.6 V449.7 H226.0 V440.2 H226.4 V430.7 H226.8 V421.1 H227.2 V411.6 H227.6 V402.1 H228.1 V392.6 H228.5 V383.1 H228.7 H229.2 H229.6 V392.6 H230.5 V402.1 H231.4 V411.6 H232.3 V421.1 H233.2 V430.7 H234.1 V440.2 H234.5 H234.8 V449.7 H235.2 H239.0 H239.2 V459.2 H239.5 H241.3 H241.6 V468.8 H241.8 H245.5 H245.9 V459.2 H246.7 V449.7 H247.5 V440.2 H248.3 V430.7 H249.1 V421.1 H249.8 V411.6 H250.6 V402.1 H251.4 V392.6 H252.2 V383.1 H252.6 H253.2 H253.8 V392.6 H254.9 V402.1 H256.0 V411.6 H257.2 V421.1 H258.3 V430.7 H259.4 V440.2 H260.0 H271.3 H271.5 V430.7 H272.0 V421.1 H272.5 V411.6 H272.9 V402.1 H273.4 V392.6 H273.9 V383.1 H274.3 V373.5 H274.8 V364.0 H275.3 V354.5 H275.5 H276.1 H276.7 V364.0 H278.0 V373.5 H279.2 V383.1 H280.5 V392.6 H281.8 V402.1 H283.0 V411.6 H284.3 V421.1 H285.5 V430.7 H286.8 V440.2 H287.4 H293.9 H294.2 V430.7 H294.8 V421.1 H295.4 V411.6 H296.0 V402.1 H296.6 V392.6 H297.2 V383.1 H297.8 V373.5 H298.4 V364.0 H298.7 H301.0 H301.6 V373.5 H302.7 V383.1 H303.9 V392.6 H305.1 V402.1 H306.2 V411.6 H307.4 V421.1 H308.6 V430.7 H309.7 V440.2 H310.3 H316.1 H316.4 V430.7 H316.9 V421.1 H317.4 V411.6 H317.9 V402.1 H318.5 V392.6 H319.0 V383.1 H319.5 V373.5 H320.1 V364.0 H320.6 V354.5 H321.1 V345.0 H321.6 V335.4 H321.9 H322.5 H323.1 V345.0 H324.2 V354.5 H325.4 V364.0 H326.5 V373.5 H327.6 V383.1 H328.8 V392.6 H329.9 V402.1 H331.0 V411.6 H332.2 V421.1 H333.3 V430.7 H333.9 H334.7 V440.2 H335.5 H338.7 H339.0 V430.7 H339.5 V421.1 H340.0 V411.6 H340.5 V402.1 H341.1 V392.6 H341.6 V383.1 H342.1 V373.5 H342.7 V364.0 H343.2 V354.5 H343.7 V345.0 H344.2 V335.4 H344.5 H345.1 H345.6 V345.0 H346.5 V354.5 H347.5 V364.0 H348.4 V373.5 H349.4 V383.1 H350.3 V392.6 H351.2 V402.1 H352.2 V411.6 H353.1 V421.1 H354.1 V430.7 H355.0 V440.2 H355.5 H369.4 H369.6 V430.7 H370.1 V421.1 H370.3 H372.6 H373.0 V430.7 H373.8 V440.2 H374.2 H385.5 H385.9 V430.7 H386.7 V421.1 H387.1 H387.6 V411.6 H388.7 V402.1 H389.8 V392.6 H390.3 H390.9 H391.5 V402.1 H392.9 V411.6 H393.5 H394.6 V421.1 H396.8 V430.7 H398.9 V440.2 H400.0 H401.6 L411.3 421.1 H412.1 V411.6 H413.7 V402.1 H414.5 H415.1 H416.0 V411.6 H417.9 V421.1 H419.8 V430.7 H421.7 V440.2 H422.6 H425.8 H426.6 V449.7 H427.4 H427.7 V459.2 H428.2 V468.8 H428.7 V478.3 H429.0 H429.4 V468.8 H429.7 H431.0 V459.2 H432.3 H433.9 V449.7 H435.5 H436.8 V440.2 H438.0 H440.5 H441.2 V449.7 H442.6 V459.2 H444.1 V468.8 H444.8 H455.5 H456.2 V459.2 H457.8 V449.7 H459.2 V440.2 H460.0 H460.5 V430.7 H461.4 V421.1 H461.9 H464.2 H464.4 V430.7 H464.6 V440.2 H464.8 H466.5 H467.4 V449.7 H468.4 L478.1 459.2 H478.4 V449.7 H479.1 V440.2 H479.4 H479.5 V430.7 H479.9 V421.1 H480.1 V411.6 H480.3 H484.5 H484.9 V402.1 H485.2 H485.8 H486.3 V411.6 H486.8 H487.9 V421.1 H489.0 H489.4 V430.7 H490.2 V440.2 H490.6 H494.8 H495.1 V449.7 H495.5 H500.6 H501.0 V440.2 H501.3 H501.6 V430.7 H502.3 V421.1 H502.9 V411.6 H503.5 V402.1 H504.2 V392.6 H504.5 H505.6 V383.1 H506.8 H507.1 V392.6 H507.5 H510.3 H511.1 V402.1 H512.7 V411.6 H514.4 V421.1 H516.0 V430.7 H516.8 H517.1 V440.2 H517.4 H521.3 H521.8 V449.7 H522.3 H522.8 V440.2 H523.2 H523.6 V430.7 H524.4 V421.1 H525.2 V411.6 H525.9 V402.1 H526.7 V392.6 H527.1 H527.9 V383.1 H528.7 H531.9 H532.7 V392.6 H533.5 H534.5 V402.1 H536.5 V411.6 H538.6 V421.1 H540.6 V430.7 H541.6 H542.1 V440.2 H542.6 H547.4 H547.6 V430.7 H547.9 V421.1 H548.1 H549.7 V411.6 H551.3 H551.8 V402.1 H553.0 V392.6 H553.5 H554.0 H554.4 V402.1 H555.1 V411.6 H555.5 H556.9 V421.1 H559.6 V430.7 H561.0 H561.5 V440.2 H561.9 H570.6 H571.0 V430.7 H571.9 V421.1 H572.3 H573.1 V411.6 H573.9 H580.3 H580.8 V421.1 H581.8 V430.7 H582.7 V440.2 H583.2 H587.1 H587.6 V449.7 H588.1 H591.3 H592.1 V440.2 H592.9 H593.7 V449.7 H594.5 H595.3 V440.2 H596.1 H601.0 H601.0 V430.7 H601.0 H601.2 V440.2 H601.5 H605.8 H606.1 V449.7 H606.5 H607.8 V459.2 H609.0 H610.6 V468.8 H612.3 H616.1 H616.6 V459.2 H617.1 H617.4 V449.7 H618.0 V440.2 H618.6 V430.7 H619.2 V421.1 H619.8 V411.6 H620.4 V402.1 H621.0 V392.6 H621.3 H626.8 H627.3 V402.1 H628.2 V411.6 H629.2 V421.1 H630.2 V430.7 H631.1 V440.2 H631.6 H632.9 V449.7 H634.2 H639.7 H640.2 V440.2 H641.2 V430.7 H642.1 V421.1 H643.1 V411.6 H644.0 V402.1 H645.0 V392.6 H645.5 H648.4 H649.3 V402.1 H651.1 V411.6 H652.9 V421.1 H654.7 V430.7 H656.5 V440.2 H657.4 H664.5 H665.2 V430.7 H666.6 V421.1 H668.0 V411.6 H668.7 H669.3 H670.0 V421.1 H671.5 V430.7 H673.0 V440.2 H674.5 V449.7 H675.2 H677.4 H677.4 V459.2 H677.4 H677.5 V449.7 H677.6 H779.4 H779.7 V440.2 H780.0 H785.2 H785.4 V430.7 H785.8 V421.1 H786.0 H788.4 H788.5 V430.7 H788.9 V440.2 H789.0 H798.1 H798.4 V449.7 H798.7 H800.3 V440.2 H801.9 H802.6 V430.7 H804.0 V421.1 H805.4 V411.6 H806.1 H812.3 H812.8 V421.1 H813.2 H815.5 H816.1 V430.7 H817.5 V440.2 H818.1 H821.3 H821.8 V449.7 H822.3 H822.4 V440.2 H822.5 H824.5 H825.1 V430.7 H826.5 V421.1 H827.8 V411.6 H828.4 H837.4 H838.4 V421.1 H840.3 V430.7 H842.2 V440.2 H843.2 H848.7 H849.1 V430.7 H850.0 V421.1 H850.8 V411.6 H851.6 V402.1 H852.5 V392.6 H852.9 H858.4 H858.6 V402.1 H859.1 V411.6 H859.4 H862.6 H864.5 V421.1 H866.5 H872.9 H873.5 V411.6 H874.8 V402.1 H876.1 V392.6 H876.8 H881.0 H881.7 V402.1 H883.1 V411.6 H884.5 V421.1 H885.2 H893.9 H894.7 V411.6 H896.3 V402.1 H897.9 V392.6 H899.5 V383.1 H900.3 H902.6 H902.9 V392.6 H903.2 H904.8 H905.3 V402.1 H905.8 H906.5 V411.6 H907.1 H907.1 V402.1 H907.1 L941.3 411.6 H941.8 V402.1 H942.8 V392.6 H943.7 V383.1 H944.7 V373.5 H945.2 H950.6 H950.9 V383.1 H951.4 V392.6 H951.6 H954.8 H955.4 V402.1 H956.8 V411.6 H957.4 H965.5 H965.9 V402.1 H966.7 V392.6 H967.5 V383.1 H968.3 V373.5 H968.7 L1058.0 440.2 H1058.5 V430.7 H1059.0" fill="none" stroke="#7cb5ec" stroke-width="1.15" stroke-linejoin="round"/>
<g fill="#7cb5ec"><rect x="197.0" y="449.7" width="2.5" height="9.5"/><rect x="214.0" y="440.2" width="1.8" height="9.5"/><rect x="235.0" y="440.2" width="2.6" height="9.5"/><rect x="239.0" y="449.7" width="2.5" height="9.5"/><rect x="241.5" y="459.2" width="3.5" height="9.5"/><rect x="207.7" y="430.7" width="3.9" height="9.5"/><rect x="265.8" y="440.2" width="3.2" height="9.5"/><rect x="289.0" y="440.2" width="3.0" height="9.5"/><rect x="334.0" y="430.7" width="4.5" height="9.5"/><rect x="379.0" y="440.2" width="5.5" height="9.5"/><rect x="390.8" y="402.1" width="2.4" height="9.5"/><rect x="461.9" y="421.1" width="2.3" height="9.5"/><rect x="565.8" y="440.2" width="4.8" height="9.5"/><rect x="573.9" y="411.6" width="6.4" height="9.5"/><rect x="588.1" y="440.2" width="3.2" height="9.5"/><rect x="609.0" y="459.2" width="7.1" height="9.5"/><rect x="645.5" y="392.6" width="2.9" height="9.5"/><rect x="654.2" y="430.7" width="3.2" height="9.5"/><rect x="785.3" y="421.1" width="2.7" height="19.1"/><rect x="791.6" y="440.2" width="6.5" height="9.5"/><rect x="815.5" y="421.1" width="2.6" height="19.1"/><rect x="862.6" y="411.6" width="3.9" height="9.5"/><rect x="888.1" y="421.1" width="5.8" height="9.5"/><rect x="945.2" y="373.5" width="5.4" height="9.5"/><rect x="954.8" y="392.6" width="2.6" height="9.5"/><rect x="528.7" y="383.1" width="3.2" height="9.5"/></g>
<line x1="1009.4" y1="369.20" x2="1017.8" y2="369.20" stroke="#7cb5ec" stroke-width="1.1"/>
<circle cx="1013.6" cy="369.20" r="2.2" fill="#7cb5ec"/>
<text x="1021.2" y="371.70" font-size="7.0" fill="#333" font-weight="bold" font-family="Liberation Sans">土壤温度(层1)</text>
<line x1="1009.4" y1="379.32" x2="1017.8" y2="379.32" stroke="#cccccc" stroke-width="1.1"/>
<path d="M1013.6 377.12 l2.2 2.2 l-2.2 2.2 l-2.2 -2.2z" fill="#cccccc"/>
<text x="1021.2" y="381.82" font-size="7.0" fill="#cccccc" font-weight="bold" font-family="Liberation Sans">土壤湿度(层1)</text>
<line x1="1009.4" y1="389.44" x2="1017.8" y2="389.44" stroke="#cccccc" stroke-width="1.1"/>
<rect x="1011.6" y="387.44" width="4" height="4" fill="#cccccc"/>
<text x="1021.2" y="391.94" font-size="7.0" fill="#cccccc" font-weight="bold" font-family="Liberation Sans">土壤温度(层2)</text>
<line x1="1009.4" y1="399.56" x2="1017.8" y2="399.56" stroke="#cccccc" stroke-width="1.1"/>
<path d="M1013.6 397.36 l2.3 3.8 h-4.6z" fill="#cccccc"/>
<text x="1021.2" y="402.06" font-size="7.0" fill="#cccccc" font-weight="bold" font-family="Liberation Sans">土壤湿度(层2)</text>
<line x1="1009.4" y1="409.68" x2="1017.8" y2="409.68" stroke="#cccccc" stroke-width="1.1"/>
<path d="M1013.6 411.88 l2.3 -3.8 h-4.6z" fill="#cccccc"/>
<text x="1021.2" y="412.18" font-size="7.0" fill="#cccccc" font-weight="bold" font-family="Liberation Sans">土壤温度(层3)</text>
<line x1="1009.4" y1="419.80" x2="1017.8" y2="419.80" stroke="#cccccc" stroke-width="1.1"/>
<circle cx="1013.6" cy="419.80" r="2.2" fill="#cccccc"/>
<text x="1021.2" y="422.30" font-size="7.0" fill="#cccccc" font-weight="bold" font-family="Liberation Sans">土壤湿度(层3)</text>
<text x="1067.5" y="502" text-anchor="end" font-size="5.4" fill="#999" font-family="Liberation Sans">Highcharts.com</text>
</svg>
<div class="a" style="left:1074.2px;top:284px;width:5.8px;height:224px;background:#f0f0f0;border-left:0.8px solid #dcdcdc"></div>
<div class="a" style="left:1074.6px;top:317px;width:4.2px;height:31.4px;border-radius:2.1px;background:linear-gradient(#585858 0,#585858 20%,#3d9e5c 22%,#3d9e5c 100%)"></div>
<div class="a" style="left:0;top:508.8px;width:1080px;height:18.2px;background:#4a5a7a"></div>
<div class="a" style="left:0;top:509.4px;width:44.6px;height:15.3px;background:#52607d;border-radius:1px"></div>
<svg class="a" style="left:4.8px;top:511.5px" width="11" height="11" viewBox="0 0 11 11"><path d="M5.5 0.3 L11 5.3 H9.4 V10.8 H6.8 V7.4 H4.2 V10.8 H1.6 V5.3 H0 Z M8 1.2 h1.4 v2.6 l-1.4 -1.3z" fill="#fff"/></svg>
<div class="a t" style="left:18px;top:513.3px;font-size:10.6px;color:#f2f4f8">菜单</div>
<svg class="a" style="left:996.6px;top:513.7px" width="12" height="9" viewBox="0 0 12 9"><rect x="0.5" y="2" width="9" height="7.5" fill="#fff"/><rect x="1.5" y="0.3" width="1.5" height="2.5" fill="#fff"/><rect x="7" y="0.3" width="1.5" height="2.5" fill="#fff"/><path d="M2 4.5 h2 M6 4.5 h2 M2 6.8 h2 M6 6.8 h2" stroke="#4a5a7a" stroke-width="0.9"/></svg>
<svg class="a" style="left:1017.0px;top:513.7px" width="12" height="9" viewBox="0 0 12 9"><path d="M0.3 0.8 h7 v4.6 h-4 l-2 1.6 v-1.6 h-1z" fill="#fff"/><path d="M3.5 6.5 h4.5 l2 1.6 v-1.6 h1 v-5 h-2.5 v4.5 h-5z" fill="#fff"/></svg>
<svg class="a" style="left:1038.8px;top:513.7px" width="12" height="9" viewBox="0 0 12 9"><rect x="0.3" y="0.8" width="11" height="7.6" fill="#fff"/><path d="M0.8 1.3 L5.8 5.3 L10.8 1.3" stroke="#4a5a7a" stroke-width="0.9" fill="none"/></svg>
<svg class="a" style="left:1062.9px;top:513.7px" width="12" height="9" viewBox="0 0 12 9"><circle cx="3.8" cy="2.6" r="2.3" fill="#fff"/><path d="M0 8.8 Q0.3 5.5 3.8 5.3 Q7.3 5.5 7.6 8.8z" fill="#fff"/><circle cx="7.3" cy="3.8" r="1.8" fill="#fff"/><path d="M5 8.8 Q5.5 6.2 7.6 6 Q9.8 6.2 10 8.8z" fill="#fff"/></svg>
</body></html>
